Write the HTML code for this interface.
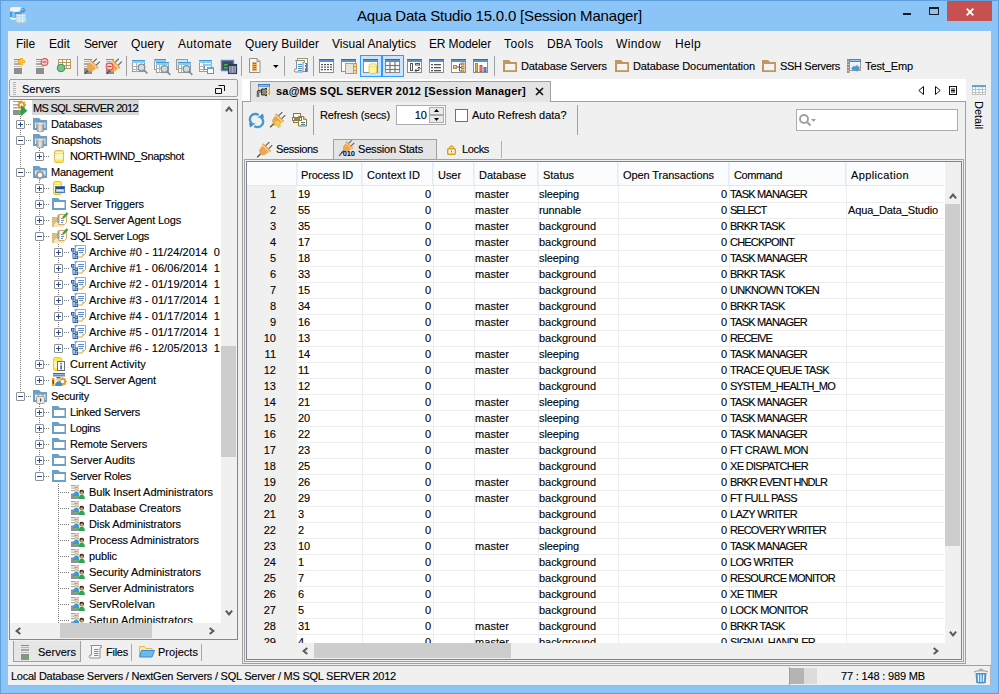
<!DOCTYPE html>
<html><head><meta charset="utf-8"><title>Aqua Data Studio 15.0.0 [Session Manager]</title>
<style>
html,body{margin:0;padding:0}
body{width:999px;height:694px;overflow:hidden;position:relative;background:#8bc4f7;font-family:"Liberation Sans",sans-serif;font-size:11px;color:#000}
.a{position:absolute;box-sizing:border-box}
.t{position:absolute;white-space:pre;color:#000}
.s{-webkit-text-stroke:0.12px #000}
.b{font-weight:bold}
svg{overflow:visible}
</style></head><body>
<svg width="0" height="0" style="position:absolute"><defs><linearGradient id="gcyl" x1="0" x2="1" y1="0" y2="0"><stop offset="0" stop-color="#9a9a9a"/><stop offset=".45" stop-color="#f0f0f0"/><stop offset="1" stop-color="#8c8c8c"/></linearGradient></defs></svg>
<div class="a" style="left:0px;top:0px;width:999px;height:694px;border:1px solid #5f9fdc;"></div>
<div class="a" style="left:8px;top:31px;width:983px;height:655px;background:#f0f0f0;"></div>
<svg class="a" style="left:10px;top:7px" width="17" height="17" viewBox="0 0 17 17"><rect x="0" y="0" width="11.800" height="12.800" rx="2.500" ry="1.800" fill="#f6f2ee"/><path d="M0 4.300 q5.900 1.600 11.800 0 v5.700 q-5.900 1.600 -11.800 0z" fill="#3a9cec"/><path d="M2 4.800 q2 .5 3 .5 v5.700 q-1.500 0 -3 -.5z" fill="#7cc4f8"/><circle cx="12.8" cy="3.3" r="2.4" fill="#3a98e8" stroke="none" stroke-width="1"/><circle cx="12.5" cy="2.7" r="1" fill="#8cccf8" stroke="none" stroke-width="1"/><rect x="5.9" y="7" width="10.1" height="9" fill="#a4e0f8" /><rect x="5.9" y="7" width="10.1" height="2" fill="#eceae6" /><rect x="6.200" y="7.300" width="9.500" height="8.400" fill="none" stroke="#c8c2bc" stroke-width=".8"/><line x1="6" y1="11" x2="16" y2="11" stroke="#e8f8ff" stroke-width="0.7" /><line x1="6" y1="13.3" x2="16" y2="13.3" stroke="#e8f8ff" stroke-width="0.7" /><line x1="9.3" y1="9" x2="9.3" y2="16" stroke="#e8f8ff" stroke-width="0.7" /><line x1="12.6" y1="9" x2="12.6" y2="16" stroke="#e8f8ff" stroke-width="0.7" /></svg>
<span id="t1" class="t " style="top:5.5px;font-size:15px;line-height:20px;height:20px;left:357px;letter-spacing:-0.188px;">Aqua Data Studio 15.0.0 [Session Manager]</span>
<div class="a" style="left:903px;top:13px;width:8px;height:2px;background:#1a1a1a;"></div>
<div class="a" style="left:929px;top:7px;width:10px;height:8px;border:1px solid #1a1a1a;border-top-width:2px;"></div>
<div class="a" style="left:947px;top:1px;width:45px;height:20px;background:#c75050;"></div>
<svg class="a" style="left:966px;top:7.5px" width="8" height="8" viewBox="0 0 8 8"><path d="M.7 .7 L7.300 7.300 M7.300 .7 L.7 7.300" stroke="#fff" stroke-width="1.900" fill="none"/></svg>
<span id="t2" class="t " style="top:34.5px;font-size:12px;line-height:18px;height:18px;left:16px;letter-spacing:-0.086px;">File</span>
<span id="t3" class="t " style="top:34.5px;font-size:12px;line-height:18px;height:18px;left:49px;letter-spacing:0.078px;">Edit</span>
<span id="t4" class="t " style="top:34.5px;font-size:12px;line-height:18px;height:18px;left:84px;letter-spacing:-0.391px;">Server</span>
<span id="t5" class="t " style="top:34.5px;font-size:12px;line-height:18px;height:18px;left:131px;letter-spacing:0.062px;">Query</span>
<span id="t6" class="t " style="top:34.5px;font-size:12px;line-height:18px;height:18px;left:178px;letter-spacing:0.328px;">Automate</span>
<span id="t7" class="t " style="top:34.5px;font-size:12px;line-height:18px;height:18px;left:245px;letter-spacing:0.048px;">Query Builder</span>
<span id="t8" class="t " style="top:34.5px;font-size:12px;line-height:18px;height:18px;left:332px;letter-spacing:0.053px;">Visual Analytics</span>
<span id="t9" class="t " style="top:34.5px;font-size:12px;line-height:18px;height:18px;left:429px;letter-spacing:-0.136px;">ER Modeler</span>
<span id="t10" class="t " style="top:34.5px;font-size:12px;line-height:18px;height:18px;left:504px;letter-spacing:0.397px;">Tools</span>
<span id="t11" class="t " style="top:34.5px;font-size:12px;line-height:18px;height:18px;left:547px;letter-spacing:0.094px;">DBA Tools</span>
<span id="t12" class="t " style="top:34.5px;font-size:12px;line-height:18px;height:18px;left:616px;letter-spacing:0.385px;">Window</span>
<span id="t13" class="t " style="top:34.5px;font-size:12px;line-height:18px;height:18px;left:675px;letter-spacing:0.328px;">Help</span>
<svg class="a" style="left:14px;top:58px" width="16" height="16" viewBox="0 0 16 16"><rect x="0" y="1" width="8" height="1" fill="#8a8a8a" /><rect x="0" y="3" width="8" height="1" fill="#b4b4b4" /><rect x="0" y="5" width="8" height="2" fill="#a8a8a8" /><rect x="0" y="8" width="8" height="1" fill="#bdbdbd" /><rect x="0" y="10" width="8" height="6" fill="#8e8e8e" /><rect x="5" y="12" width="1" height="1" fill="#30e030" /><rect x="6" y="0" width="3" height="7" fill="#f0b030" /><rect x="4" y="2" width="7" height="3" fill="#f0b030" /><rect x="7" y="1" width="1" height="5" fill="#ffd050" /><rect x="5" y="3" width="5" height="1" fill="#ffd050" /></svg>
<svg class="a" style="left:36px;top:58px" width="16" height="16" viewBox="0 0 16 16"><rect x="0" y="1" width="8" height="1" fill="#8a8a8a" /><rect x="0" y="3" width="8" height="1" fill="#b4b4b4" /><rect x="0" y="5" width="8" height="2" fill="#a8a8a8" /><rect x="0" y="8" width="8" height="1" fill="#bdbdbd" /><rect x="0" y="10" width="8" height="6" fill="#8e8e8e" /><rect x="5" y="12" width="1" height="1" fill="#30e030" /><circle cx="8.5" cy="4" r="3.4" fill="#fad8d8" stroke="#e05050" stroke-width="1.1"/><rect x="6.5" y="3.4" width="4" height="1.2" fill="#d03838" /></svg>
<svg class="a" style="left:55px;top:58px" width="16" height="16" viewBox="0 0 16 16"><rect x="3.5" y="1.5" width="12" height="9" fill="#fff" stroke="#c09660" stroke-width="1"/><line x1="3" y1="4.5" x2="16" y2="4.5" stroke="#c09660" stroke-width="1" /><line x1="3" y1="7.5" x2="16" y2="7.5" stroke="#c09660" stroke-width="1" /><line x1="7.5" y1="1" x2="7.5" y2="11" stroke="#c09660" stroke-width="1" /><line x1="11.5" y1="1" x2="11.5" y2="11" stroke="#c09660" stroke-width="1" /><circle cx="6" cy="10" r="3.8" fill="#7cc08a" stroke="#2f9e54" stroke-width="1"/></svg>
<div class="a" style="left:77px;top:56px;width:1px;height:20px;background:#a0a0a0;"></div>
<svg class="a" style="left:84px;top:58px" width="16" height="16" viewBox="0 0 16 16"><rect x="0" y="1" width="8" height="1" fill="#8a8a8a" /><rect x="0" y="3" width="8" height="1" fill="#b4b4b4" /><rect x="0" y="5" width="8" height="2" fill="#a8a8a8" /><rect x="0" y="8" width="8" height="1" fill="#bdbdbd" /><rect x="0" y="10" width="8" height="6" fill="#8e8e8e" /><rect x="5" y="12" width="1" height="1" fill="#30e030" /><g transform="translate(8.1 8.3) rotate(-45) scale(1.1)"><line x1="-9.5" y1="0" x2="-4" y2="0" stroke="#505050" stroke-width="1.2" /><path d="M1.500 -3.900 h-2.500 q-4.300 .2 -4.300 3.900 q0 3.700 4.300 3.900 h2.500z" fill="#eca850"/><rect x="1.2" y="-5" width="2.2" height="10" fill="#e8a040" /><rect x="1.3" y="-5" width="0.9" height="10" fill="#f8dcb0" /><line x1="3.4" y1="-1.9" x2="8" y2="-1.9" stroke="#606060" stroke-width="1.1" /><line x1="3.4" y1="1.9" x2="8" y2="1.9" stroke="#606060" stroke-width="1.1" /></g></svg>
<svg class="a" style="left:106px;top:58px" width="16" height="16" viewBox="0 0 16 16"><rect x="0" y="1" width="8" height="1" fill="#8a8a8a" /><rect x="0" y="3" width="8" height="1" fill="#b4b4b4" /><rect x="0" y="5" width="8" height="2" fill="#a8a8a8" /><rect x="0" y="8" width="8" height="1" fill="#bdbdbd" /><rect x="0" y="10" width="8" height="6" fill="#8e8e8e" /><rect x="5" y="12" width="1" height="1" fill="#30e030" /><g transform="translate(8.1 8.3) rotate(-45) scale(1.1)"><line x1="-9.5" y1="0" x2="-4" y2="0" stroke="#505050" stroke-width="1.2" /><path d="M1.500 -3.900 h-2.500 q-4.300 .2 -4.300 3.900 q0 3.700 4.300 3.900 h2.500z" fill="#eca850"/><rect x="1.2" y="-5" width="2.2" height="10" fill="#e8a040" /><rect x="1.3" y="-5" width="0.9" height="10" fill="#f8dcb0" /><line x1="3.4" y1="-1.9" x2="8" y2="-1.9" stroke="#606060" stroke-width="1.1" /><line x1="3.4" y1="1.9" x2="8" y2="1.9" stroke="#606060" stroke-width="1.1" /></g><circle cx="3.5" cy="8.5" r="3.4" fill="#fad8d8" stroke="#e05050" stroke-width="1.1"/><rect x="1.5" y="7.9" width="4" height="1.2" fill="#d03838" /></svg>
<div class="a" style="left:126px;top:56px;width:1px;height:20px;background:#a0a0a0;"></div>
<svg class="a" style="left:132px;top:59px" width="16" height="16" viewBox="0 0 16 16"><rect x="0.5" y="1.5" width="12" height="11" fill="#fff" stroke="#9a9a9a" stroke-width="1"/><rect x="0" y="1" width="13" height="3" fill="#8ecbf0" /><rect x="0" y="1" width="13" height="1" fill="#3d9bd8" /><line x1="0" y1="7.5" x2="13" y2="7.5" stroke="#b0b0b0" stroke-width="1" /><line x1="0" y1="10.5" x2="8" y2="10.5" stroke="#b0b0b0" stroke-width="1" /><line x1="4.5" y1="4" x2="4.5" y2="13" stroke="#b0b0b0" stroke-width="1" /><line x1="11.81" y1="10.81" x2="15.31" y2="14.31" stroke="#8a8a8a" stroke-width="1.6" /><circle cx="9.5" cy="8.5" r="3.3" fill="#c4dff0" stroke="#8c8c8c" stroke-width="1.2"/></svg>
<svg class="a" style="left:154px;top:59px" width="16" height="16" viewBox="0 0 16 16"><rect x="0.5" y="0.5" width="11" height="10" fill="#fff" stroke="#9a9a9a" stroke-width="1"/><rect x="0" y="0" width="12" height="3" fill="#8ecbf0" /><rect x="0" y="0" width="12" height="1" fill="#3d9bd8" /><rect x="2.5" y="3.5" width="12" height="10" fill="#fff" stroke="#9a9a9a" stroke-width="1"/><rect x="2" y="3" width="13" height="3" fill="#8ecbf0" /><rect x="2" y="3" width="13" height="1" fill="#3d9bd8" /><rect x="6" y="7" width="3" height="3" fill="#fae890" /><line x1="2" y1="9.5" x2="9" y2="9.5" stroke="#b0b0b0" stroke-width="1" /><line x1="5.5" y1="6" x2="5.5" y2="14" stroke="#b0b0b0" stroke-width="1" /><line x1="12.81" y1="12.31" x2="16.31" y2="15.81" stroke="#8a8a8a" stroke-width="1.6" /><circle cx="10.5" cy="10" r="3.3" fill="#c4dff0" stroke="#8c8c8c" stroke-width="1.2"/></svg>
<svg class="a" style="left:176px;top:59px" width="16" height="16" viewBox="0 0 16 16"><rect x="0.5" y="0.5" width="11" height="10" fill="#cfe4f4" stroke="#9a9a9a" stroke-width="1"/><rect x="2.5" y="3.5" width="12" height="10" fill="#fff" stroke="#9a9a9a" stroke-width="1"/><rect x="2" y="3" width="13" height="3" fill="#8ecbf0" /><rect x="2" y="3" width="13" height="1" fill="#3d9bd8" /><rect x="6" y="7" width="3" height="3" fill="#fae890" /><line x1="2" y1="9.5" x2="9" y2="9.5" stroke="#b0b0b0" stroke-width="1" /><line x1="5.5" y1="6" x2="5.5" y2="14" stroke="#b0b0b0" stroke-width="1" /><line x1="12.81" y1="12.31" x2="16.31" y2="15.81" stroke="#8a8a8a" stroke-width="1.6" /><circle cx="10.5" cy="10" r="3.3" fill="#c4dff0" stroke="#8c8c8c" stroke-width="1.2"/></svg>
<svg class="a" style="left:199px;top:59px" width="16" height="16" viewBox="0 0 16 16"><rect x="0.5" y="1.5" width="12" height="11" fill="#fff" stroke="#9a9a9a" stroke-width="1"/><rect x="0" y="1" width="13" height="3" fill="#8ecbf0" /><rect x="0" y="1" width="13" height="1" fill="#3d9bd8" /><line x1="0" y1="7.5" x2="6" y2="7.5" stroke="#b0b0b0" stroke-width="1" /><line x1="0" y1="10.5" x2="6" y2="10.5" stroke="#b0b0b0" stroke-width="1" /><line x1="4.5" y1="4" x2="4.5" y2="13" stroke="#b0b0b0" stroke-width="1" /><rect x="5.5" y="5.5" width="7" height="5" fill="#fff" stroke="#8a8a8a" stroke-width="1"/><rect x="5" y="5" width="8" height="2" fill="#8ecbf0" /><rect x="8.5" y="8.5" width="6" height="6" fill="#fff" stroke="#8a8a8a" stroke-width="1"/><rect x="8" y="8" width="7" height="2" fill="#5aa8dc" /></svg>
<svg class="a" style="left:221px;top:59px" width="16" height="16" viewBox="0 0 16 16"><rect x="0.5" y="1.5" width="12" height="10" fill="#4a4a4a" stroke="#5a86c8" stroke-width="1.4"/><rect x="3" y="5" width="5" height="1.5" fill="#30c050" /><rect x="3" y="8" width="5" height="1.5" fill="#30c050" /><rect x="7.5" y="5.5" width="8" height="9" fill="#a4acbc" stroke="#2c3c5c" stroke-width="1.2"/><rect x="7" y="5" width="9" height="2" fill="#2c3c5c" /><line x1="10" y1="7" x2="10" y2="15" stroke="#5c6884" stroke-width="1" /><line x1="13" y1="7" x2="13" y2="15" stroke="#5c6884" stroke-width="1" /></svg>
<div class="a" style="left:241px;top:56px;width:1px;height:20px;background:#a0a0a0;"></div>
<svg class="a" style="left:249px;top:58px" width="12" height="16" viewBox="0 0 12 16"><path d="M.5 .5 h7.5 l3 3 v11 h-10.5 z" fill="#f6f6f6" stroke="#909090"/><path d="M8 .5 v3 h3" fill="none" stroke="#909090"/><rect x="3" y="4" width="5" height="9" fill="#e8b470" /><rect x="4" y="5" width="3" height="1" fill="#3a88c8" /><rect x="4" y="7" width="3" height="1" fill="#3a88c8" /><rect x="4" y="9" width="3" height="1" fill="#3a88c8" /><rect x="4" y="11" width="3" height="1" fill="#3a88c8" /></svg>
<svg class="a" style="left:273px;top:65px" width="5" height="3" viewBox="0 0 5 3"><path d="M0 0 h5.600 l-2.800 3z" fill="#000"/></svg>
<div class="a" style="left:284px;top:56px;width:1px;height:20px;background:#a0a0a0;"></div>
<svg class="a" style="left:292px;top:58px" width="16" height="16" viewBox="0 0 16 16"><rect x="5.5" y="0.5" width="10" height="13" fill="#fff" stroke="#a89858" stroke-width="1"/><rect x="13" y="5" width="2" height="9" fill="#5878c0" /><rect x="13" y="6" width="1" height="1" fill="#fff" /><rect x="13" y="9" width="1" height="1" fill="#fff" /><path d="M3.5 2.5 h9 v2 h-1.5 v9.5 h-8 q-1.5 -1.5 0 -3 h1.5 v-7 q0 -1.5 -1 -1.5z" fill="#f4f4f4" stroke="#8c8c8c"/><line x1="6" y1="6.5" x2="10" y2="6.5" stroke="#4a98d0" stroke-width="1" /><line x1="6" y1="8.5" x2="10" y2="8.5" stroke="#4a98d0" stroke-width="1" /><line x1="6" y1="10.5" x2="10" y2="10.5" stroke="#4a98d0" stroke-width="1" /><line x1="6" y1="12.5" x2="10" y2="12.5" stroke="#4a98d0" stroke-width="1" /></svg>
<div class="a" style="left:313px;top:56px;width:1px;height:20px;background:#a0a0a0;"></div>
<svg class="a" style="left:319px;top:58px" width="16" height="16" viewBox="0 0 16 16"><rect x="0.5" y="1.5" width="14" height="13" fill="#fff" stroke="#8c8c8c" stroke-width="1"/><rect x="0" y="1" width="15" height="3" fill="#5890d0" /><rect x="0" y="1" width="15" height="1" fill="#3868a8" /><rect x="2" y="6" width="2" height="1.2" fill="#555" /><rect x="5" y="6" width="2" height="1.2" fill="#555" /><rect x="8" y="6" width="2" height="1.2" fill="#555" /><rect x="11" y="6" width="2" height="1.2" fill="#555" /><rect x="2" y="8.5" width="2" height="1.2" fill="#555" /><rect x="5" y="8.5" width="2" height="1.2" fill="#555" /><rect x="8" y="8.5" width="2" height="1.2" fill="#555" /><rect x="11" y="8.5" width="2" height="1.2" fill="#555" /><rect x="2" y="11" width="2" height="1.2" fill="#555" /><rect x="5" y="11" width="2" height="1.2" fill="#555" /><rect x="8" y="11" width="2" height="1.2" fill="#555" /><rect x="11" y="11" width="2" height="1.2" fill="#555" /></svg>
<svg class="a" style="left:341px;top:58px" width="16" height="16" viewBox="0 0 16 16"><rect x="0.5" y="1.5" width="14" height="12" fill="#fff" stroke="#8c8c8c" stroke-width="1"/><rect x="0" y="1" width="15" height="3" fill="#5890d0" /><rect x="0" y="1" width="15" height="1" fill="#3868a8" /><rect x="4.5" y="5.5" width="11" height="10" fill="#ece4d4" stroke="#c89858" stroke-width="1"/><rect x="12.5" y="5.5" width="3" height="10" fill="#f0d8b0" stroke="#c89858" stroke-width="1"/><line x1="12" y1="8.5" x2="16" y2="8.5" stroke="#c89858" stroke-width="1" /><line x1="12" y1="12.5" x2="16" y2="12.5" stroke="#c89858" stroke-width="1" /></svg>
<div class="a" style="left:360px;top:55px;width:22px;height:22px;background:#cce4f7;border:1px solid #3399ff;"></div>
<div class="a" style="left:382px;top:55px;width:22px;height:22px;background:#cce4f7;border:1px solid #3399ff;"></div>
<svg class="a" style="left:363px;top:58px" width="16" height="16" viewBox="0 0 16 16"><rect x="0.5" y="1.5" width="14" height="13" fill="#fff" stroke="#8c8c8c" stroke-width="1"/><rect x="0" y="1" width="15" height="3" fill="#5890d0" /><rect x="0" y="1" width="15" height="1" fill="#3868a8" /><rect x="6" y="6" width="7.5" height="9.5" rx="2" ry="1.5" fill="#fdf3a0" stroke="#e0c840" stroke-width=".8"/><ellipse cx="9.75" cy="7.2" rx="3.6" ry="1.2" fill="#fffbd0" stroke="#e0c840" stroke-width=".6"/></svg>
<svg class="a" style="left:385px;top:58px" width="16" height="16" viewBox="0 0 16 16"><rect x="0.5" y="1.5" width="14" height="13" fill="#fff" stroke="#8c8c8c" stroke-width="1"/><rect x="0" y="1" width="15" height="3" fill="#5890d0" /><rect x="0" y="1" width="15" height="1" fill="#3868a8" /><line x1="0" y1="7.5" x2="15" y2="7.5" stroke="#777" stroke-width="1.2" /><line x1="0" y1="11.5" x2="15" y2="11.5" stroke="#777" stroke-width="1.2" /><line x1="5" y1="4" x2="5" y2="15" stroke="#777" stroke-width="1.2" /><line x1="10" y1="4" x2="10" y2="15" stroke="#777" stroke-width="1.2" /></svg>
<svg class="a" style="left:407px;top:58px" width="16" height="16" viewBox="0 0 16 16"><rect x="0.5" y="1.5" width="14" height="13" fill="#fff" stroke="#8c8c8c" stroke-width="1"/><rect x="0" y="1" width="15" height="3" fill="#5890d0" /><rect x="0" y="1" width="15" height="1" fill="#3868a8" /><rect x="3.5" y="5.5" width="2" height="7" fill="#fff" stroke="#555" stroke-width="1"/><rect x="8.5" y="5.5" width="4" height="1.5" fill="#fff" stroke="#555" stroke-width="1"/><path d="M8 12.5 h4 v-3 M10.5 10.5 l1.5 -1.5 l1.5 1.5 M9.5 11 l-1.5 1.5 l1.5 1.5" fill="none" stroke="#444" stroke-width="1"/></svg>
<svg class="a" style="left:429px;top:58px" width="16" height="16" viewBox="0 0 16 16"><rect x="0.5" y="1.5" width="14" height="13" fill="#fff" stroke="#8c8c8c" stroke-width="1"/><rect x="0" y="1" width="15" height="3" fill="#5890d0" /><rect x="0" y="1" width="15" height="1" fill="#3868a8" /><rect x="2" y="6" width="2" height="1.3" fill="#555" /><rect x="5" y="6" width="7" height="1.3" fill="#555" /><rect x="2" y="9" width="2" height="1.3" fill="#555" /><rect x="5" y="9" width="7" height="1.3" fill="#555" /><rect x="2" y="12" width="2" height="1.3" fill="#555" /><rect x="5" y="12" width="7" height="1.3" fill="#555" /></svg>
<svg class="a" style="left:451px;top:58px" width="16" height="16" viewBox="0 0 16 16"><rect x="0.5" y="1.5" width="14" height="13" fill="#fff" stroke="#8c8c8c" stroke-width="1"/><rect x="0" y="1" width="15" height="3" fill="#5890d0" /><rect x="0" y="1" width="15" height="1" fill="#3868a8" /><rect x="2.5" y="7.5" width="3" height="3" fill="#f0c070" stroke="#b08848" stroke-width="1"/><rect x="10.5" y="5" width="2.5" height="2" fill="#f0c070" stroke="#b08848" stroke-width="1"/><rect x="10.5" y="8.5" width="2.5" height="2" fill="#f0c070" stroke="#b08848" stroke-width="1"/><rect x="10.5" y="12" width="2.5" height="2" fill="#f0c070" stroke="#b08848" stroke-width="1"/><path d="M6 9 h2.5 M8.5 6 v7 M8.5 6 h1.5 M8.5 9.5 h1.5 M8.5 13 h1.5" fill="none" stroke="#555" stroke-width="1"/></svg>
<svg class="a" style="left:473px;top:58px" width="16" height="16" viewBox="0 0 16 16"><rect x="0.5" y="1.5" width="14" height="13" fill="#fff" stroke="#8c8c8c" stroke-width="1"/><rect x="0" y="1" width="15" height="3" fill="#5890d0" /><rect x="0" y="1" width="15" height="1" fill="#3868a8" /><rect x="2.5" y="5.5" width="2" height="8" fill="#f0b040" stroke="#b88020" stroke-width="1"/><rect x="7" y="7.5" width="2" height="6" fill="#f09090" stroke="#c84848" stroke-width="1"/><rect x="11" y="9.5" width="2" height="4" fill="#70a8e0" stroke="#3868a8" stroke-width="1"/></svg>
<div class="a" style="left:494px;top:56px;width:1px;height:20px;background:#a0a0a0;"></div>
<svg class="a" style="left:503px;top:58px" width="14" height="14" viewBox="0 0 14 14"><path d="M0 2 h6 l2 2 h6 v10 h-14z" fill="#be9860"/><path d="M2 6 h10.200 v6.200 h-10.200z" fill="#f4f3f0"/></svg>
<span id="t14" class="t s" style="top:58px;font-size:11px;line-height:16px;height:16px;left:521px;letter-spacing:-0.128px;">Database Servers</span>
<svg class="a" style="left:615px;top:58px" width="14" height="14" viewBox="0 0 14 14"><path d="M0 2 h6 l2 2 h6 v10 h-14z" fill="#be9860"/><path d="M2 6 h10.200 v6.200 h-10.200z" fill="#f4f3f0"/></svg>
<span id="t15" class="t s" style="top:58px;font-size:11px;line-height:16px;height:16px;left:633px;letter-spacing:-0.097px;">Database Documentation</span>
<svg class="a" style="left:762px;top:58px" width="14" height="14" viewBox="0 0 14 14"><path d="M0 2 h6 l2 2 h6 v10 h-14z" fill="#be9860"/><path d="M2 6 h10.200 v6.200 h-10.200z" fill="#f4f3f0"/></svg>
<span id="t16" class="t s" style="top:58px;font-size:11px;line-height:16px;height:16px;left:780px;letter-spacing:-0.325px;">SSH Servers</span>
<svg class="a" style="left:847px;top:58px" width="16" height="16" viewBox="0 0 16 16"><rect x="2" y="1" width="12" height="12" fill="#eef4fa" /><rect x="2.5" y="1.5" width="11" height="11" fill="none" stroke="#9a9a9a" stroke-width="1"/><rect x="2" y="1" width="12" height="3" fill="#4888d0" /><rect x="3" y="2" width="10" height="0.8" fill="#a8d0f8" /><rect x="0" y="1" width="2.5" height="14" fill="#909090" /><rect x="0.5" y="3" width="1.5" height="1" fill="#d0d0d0" /><rect x="0.5" y="6" width="1.5" height="1" fill="#d0d0d0" /><rect x="0.5" y="9" width="1.5" height="1" fill="#d0d0d0" /><rect x="0.5" y="12" width="1.5" height="1" fill="#d0d0d0" /><path d="M4 10.500 l3.500 -3.500 v2 l3 -2.500 v2 h2 v3.500 h-2 v2 l-3 -2.500 v2z" fill="#4898d8"/></svg>
<span id="t17" class="t s" style="top:58px;font-size:11px;line-height:16px;height:16px;left:865px;letter-spacing:-0.115px;">Test_Emp</span>
<div class="a" style="left:9px;top:79px;width:229px;height:18px;border:1px solid #a0a0a0;background:#f0f0f0;border-radius:2px;"></div>
<div class="a" style="left:13px;top:82px;width:3px;height:1px;background:#b4b4b4;"></div>
<div class="a" style="left:13px;top:84px;width:3px;height:1px;background:#b4b4b4;"></div>
<div class="a" style="left:13px;top:86px;width:3px;height:1px;background:#b4b4b4;"></div>
<div class="a" style="left:13px;top:88px;width:3px;height:1px;background:#b4b4b4;"></div>
<div class="a" style="left:13px;top:90px;width:3px;height:1px;background:#b4b4b4;"></div>
<div class="a" style="left:13px;top:92px;width:3px;height:1px;background:#b4b4b4;"></div>
<div class="a" style="left:13px;top:94px;width:3px;height:1px;background:#b4b4b4;"></div>
<span id="t18" class="t s" style="top:81px;font-size:11px;line-height:16px;height:16px;left:22px;letter-spacing:0.013px;">Servers</span>
<svg class="a" style="left:215px;top:85px" width="11" height="10" viewBox="0 0 11 10"><path d="M3.500 .5 h6 v5.500 M.5 3.500 h6 v5 h-6z" fill="none" stroke="#111" stroke-width="1"/></svg>
<div class="a" style="left:9px;top:99px;width:229px;height:541px;border:1px solid #828790;background:#fff;"></div>
<div class="a" style="left:221px;top:100px;width:16px;height:523px;background:#f0f0f0;"></div>
<div class="a" style="left:10px;top:623px;width:227px;height:16px;background:#f0f0f0;"></div>
<div class="a" style="left:221px;top:346px;width:15px;height:111px;background:#cdcdcd;"></div>
<div class="a" style="left:60px;top:623px;width:92px;height:15px;background:#cdcdcd;"></div>
<svg class="a" style="left:225px;top:105px" width="8" height="8" viewBox="0 0 8 8"><path d="M.9 6.300 L4 2.600 L7.100 6.300" fill="none" stroke="#5a5a5a" stroke-width="2"/></svg>
<svg class="a" style="left:225px;top:609px" width="8" height="8" viewBox="0 0 8 8"><path d="M.9 1.700 L4 5.400 L7.100 1.700" fill="none" stroke="#5a5a5a" stroke-width="2"/></svg>
<svg class="a" style="left:14px;top:627px" width="8" height="8" viewBox="0 0 8 8"><path d="M6.300 .9 L2.600 4 L6.300 7.100" fill="none" stroke="#5a5a5a" stroke-width="2"/></svg>
<svg class="a" style="left:208px;top:627px" width="8" height="8" viewBox="0 0 8 8"><path d="M1.700 .9 L5.400 4 L1.700 7.100" fill="none" stroke="#5a5a5a" stroke-width="2"/></svg>
<div class="a" style="left:10px;top:99px;width:211px;height:524px;overflow:hidden">
<div class="a" style="left:10px;top:17px;width:1px;height:276px;background:repeating-linear-gradient(to bottom,#7a7a7a 0 1px,transparent 1px 2px)"></div>
<div class="a" style="left:29px;top:49px;width:1px;height:4px;background:repeating-linear-gradient(to bottom,#7a7a7a 0 1px,transparent 1px 2px)"></div>
<div class="a" style="left:29px;top:81px;width:1px;height:192px;background:repeating-linear-gradient(to bottom,#7a7a7a 0 1px,transparent 1px 2px)"></div>
<div class="a" style="left:48px;top:145px;width:1px;height:96px;background:repeating-linear-gradient(to bottom,#7a7a7a 0 1px,transparent 1px 2px)"></div>
<div class="a" style="left:29px;top:305px;width:1px;height:72px;background:repeating-linear-gradient(to bottom,#7a7a7a 0 1px,transparent 1px 2px)"></div>
<div class="a" style="left:48px;top:385px;width:1px;height:139px;background:repeating-linear-gradient(to bottom,#7a7a7a 0 1px,transparent 1px 2px)"></div>
<div class="a" style="left:22px;top:1px;width:107px;height:15px;background:#d9d9d9"></div>
<svg class="a" style="left:3px;top:1px" width="16" height="16" viewBox="0 0 16 16"><rect x="0" y="1" width="8" height="1" fill="#9a9a9a" /><rect x="0" y="4" width="8" height="1.5" fill="#b0b0b0" /><rect x="0" y="7" width="8" height="1.5" fill="#a8a8a8" /><rect x="0" y="10" width="8" height="5" fill="#909090" /><rect x="5" y="12" width="1" height="1" fill="#30e030" /><circle cx="8.5" cy="5" r="2.7" fill="#fff" stroke="#e09a28" stroke-width="1.8"/><rect x="7.7" y="0.5" width="1.6" height="1.6" fill="#e09a28" transform="rotate(0 8.5 5)"/><rect x="7.7" y="0.5" width="1.6" height="1.6" fill="#e09a28" transform="rotate(45 8.5 5)"/><rect x="7.7" y="0.5" width="1.6" height="1.6" fill="#e09a28" transform="rotate(90 8.5 5)"/><rect x="7.7" y="0.5" width="1.6" height="1.6" fill="#e09a28" transform="rotate(135 8.5 5)"/><rect x="7.7" y="0.5" width="1.6" height="1.6" fill="#e09a28" transform="rotate(180 8.5 5)"/><rect x="7.7" y="0.5" width="1.6" height="1.6" fill="#e09a28" transform="rotate(225 8.5 5)"/><rect x="7.7" y="0.5" width="1.6" height="1.6" fill="#e09a28" transform="rotate(270 8.5 5)"/><rect x="7.7" y="0.5" width="1.6" height="1.6" fill="#e09a28" transform="rotate(315 8.5 5)"/><path d="M8 5 L14.3 10.7 L8 16.3z" fill="#22a83a"/></svg>
<span id="t19" class="t s" style="top:1px;font-size:11px;line-height:16px;height:16px;left:23px;letter-spacing:-0.655px;">MS SQL SERVER 2012</span>
<div class="a" style="left:16px;top:25px;width:5px;height:1px;background:repeating-linear-gradient(to right,#7a7a7a 0 1px,transparent 1px 2px)"></div>
<div class="a" style="left:6px;top:21px;width:9px;height:9px;border:1px solid #919191;background:#fff;border-radius:1px"></div>
<div class="a" style="left:8px;top:25px;width:5px;height:1px;background:#2a4a9a"></div>
<div class="a" style="left:10px;top:23px;width:1px;height:5px;background:#2a4a9a"></div>
<svg class="a" style="left:23px;top:17px" width="16" height="16" viewBox="0 0 16 16"><path d="M0 2 h6 l2 2 h6 v10 h-14z" fill="#6a9fc8"/><path d="M2 6.500 h10.500 v5.500 h-10.500z" fill="#e4eef6"/><rect x="3.700" y="6.300" width="7.300" height="9.400" rx="2.500" ry="1.800" fill="url(#gcyl)" stroke="#8a8a8a" stroke-width=".7"/><ellipse cx="7.350" cy="7.800" rx="3.300" ry="1.200" fill="#f2f2f2" stroke="#9a9a9a" stroke-width=".5"/></svg>
<span id="t20" class="t s" style="top:17px;font-size:11px;line-height:16px;height:16px;left:41px;letter-spacing:-0.177px;">Databases</span>
<div class="a" style="left:16px;top:41px;width:5px;height:1px;background:repeating-linear-gradient(to right,#7a7a7a 0 1px,transparent 1px 2px)"></div>
<div class="a" style="left:6px;top:37px;width:9px;height:9px;border:1px solid #919191;background:#fff;border-radius:1px"></div>
<div class="a" style="left:8px;top:41px;width:5px;height:1px;background:#2a4a9a"></div>
<svg class="a" style="left:23px;top:33px" width="16" height="16" viewBox="0 0 16 16"><path d="M0 2 h6 l2 2 h6 v10 h-14z" fill="#6a9fc8"/><path d="M2 6.500 h10.500 v5.500 h-10.500z" fill="#e4eef6"/><rect x="3.700" y="6.300" width="7.300" height="9.400" rx="2.500" ry="1.800" fill="url(#gcyl)" stroke="#8a8a8a" stroke-width=".7"/><ellipse cx="7.350" cy="7.800" rx="3.300" ry="1.200" fill="#f2f2f2" stroke="#9a9a9a" stroke-width=".5"/></svg>
<span id="t21" class="t s" style="top:33px;font-size:11px;line-height:16px;height:16px;left:41px;letter-spacing:-0.220px;">Snapshots</span>
<div class="a" style="left:34px;top:57px;width:5px;height:1px;background:repeating-linear-gradient(to right,#7a7a7a 0 1px,transparent 1px 2px)"></div>
<div class="a" style="left:25px;top:53px;width:9px;height:9px;border:1px solid #919191;background:#fff;border-radius:1px"></div>
<div class="a" style="left:27px;top:57px;width:5px;height:1px;background:#2a4a9a"></div>
<div class="a" style="left:29px;top:55px;width:1px;height:5px;background:#2a4a9a"></div>
<svg class="a" style="left:42px;top:49px" width="16" height="16" viewBox="0 0 16 16"><rect x="2.500" y="2.500" width="9" height="12" rx="1.500" fill="#fbf8c8" stroke="#d8c060" stroke-width="1"/><rect x="3" y="3" width="8" height="3" fill="#ffe54a" /><rect x="3" y="11.5" width="8" height="2.5" fill="#ffe54a" /><rect x="4" y="4" width="6" height="1" fill="#fff8c0" /></svg>
<span id="t22" class="t s" style="top:49px;font-size:11px;line-height:16px;height:16px;left:60px;letter-spacing:-0.380px;">NORTHWIND_Snapshot</span>
<div class="a" style="left:16px;top:73px;width:5px;height:1px;background:repeating-linear-gradient(to right,#7a7a7a 0 1px,transparent 1px 2px)"></div>
<div class="a" style="left:6px;top:69px;width:9px;height:9px;border:1px solid #919191;background:#fff;border-radius:1px"></div>
<div class="a" style="left:8px;top:73px;width:5px;height:1px;background:#2a4a9a"></div>
<svg class="a" style="left:23px;top:65px" width="16" height="16" viewBox="0 0 16 16"><path d="M0 2 h6 l2 2 h6 v10 h-14z" fill="#6a9fc8"/><path d="M2 6.500 h10.500 v5.500 h-10.500z" fill="#e4eef6"/><circle cx="7" cy="11" r="3" fill="#f4f4f4" stroke="#9c9c9c" stroke-width="1.6"/><rect x="6.200" y="6.400" width="1.600" height="1.600" fill="#8c8c8c" transform="rotate(0 7 11)"/><rect x="6.200" y="6.400" width="1.600" height="1.600" fill="#8c8c8c" transform="rotate(45 7 11)"/><rect x="6.200" y="6.400" width="1.600" height="1.600" fill="#8c8c8c" transform="rotate(90 7 11)"/><rect x="6.200" y="6.400" width="1.600" height="1.600" fill="#8c8c8c" transform="rotate(135 7 11)"/><rect x="6.200" y="6.400" width="1.600" height="1.600" fill="#8c8c8c" transform="rotate(180 7 11)"/><rect x="6.200" y="6.400" width="1.600" height="1.600" fill="#8c8c8c" transform="rotate(225 7 11)"/><rect x="6.200" y="6.400" width="1.600" height="1.600" fill="#8c8c8c" transform="rotate(270 7 11)"/><rect x="6.200" y="6.400" width="1.600" height="1.600" fill="#8c8c8c" transform="rotate(315 7 11)"/><circle cx="7" cy="11" r="1.3" fill="#fff" stroke="none" stroke-width="1"/></svg>
<span id="t23" class="t s" style="top:65px;font-size:11px;line-height:16px;height:16px;left:41px;letter-spacing:-0.222px;">Management</span>
<div class="a" style="left:34px;top:89px;width:5px;height:1px;background:repeating-linear-gradient(to right,#7a7a7a 0 1px,transparent 1px 2px)"></div>
<div class="a" style="left:25px;top:85px;width:9px;height:9px;border:1px solid #919191;background:#fff;border-radius:1px"></div>
<div class="a" style="left:27px;top:89px;width:5px;height:1px;background:#2a4a9a"></div>
<div class="a" style="left:29px;top:87px;width:1px;height:5px;background:#2a4a9a"></div>
<svg class="a" style="left:42px;top:81px" width="16" height="16" viewBox="0 0 16 16"><rect x="1.500" y="1.500" width="8" height="13" rx="1.500" fill="#fdf4b0" stroke="#e8c830" stroke-width="1"/><rect x="2" y="2" width="7" height="3" fill="#ffe54a" /><rect x="3" y="3" width="5" height="1" fill="#fff8c0" /><rect x="2" y="12" width="7" height="2" fill="#ffe54a" /><rect x="3" y="6" width="10" height="3" fill="#2c4c90" /><rect x="3" y="9" width="10" height="4" fill="#a8c8e8" /><rect x="3.5" y="6.5" width="9" height="6" fill="none" stroke="#4878b8" stroke-width="1"/><rect x="5" y="10" width="6" height="1" fill="#e8f0f8" /></svg>
<span id="t24" class="t s" style="top:81px;font-size:11px;line-height:16px;height:16px;left:60px;letter-spacing:-0.451px;">Backup</span>
<div class="a" style="left:34px;top:105px;width:5px;height:1px;background:repeating-linear-gradient(to right,#7a7a7a 0 1px,transparent 1px 2px)"></div>
<div class="a" style="left:25px;top:101px;width:9px;height:9px;border:1px solid #919191;background:#fff;border-radius:1px"></div>
<div class="a" style="left:27px;top:105px;width:5px;height:1px;background:#2a4a9a"></div>
<div class="a" style="left:29px;top:103px;width:1px;height:5px;background:#2a4a9a"></div>
<svg class="a" style="left:42px;top:97px" width="16" height="16" viewBox="0 0 16 16"><path d="M0 2 h6 l2 2 h6 v10 h-14z" fill="#6a9fc8"/><path d="M2 6 h10.500 v6 h-10.500z" fill="#fff"/></svg>
<span id="t25" class="t s" style="top:97px;font-size:11px;line-height:16px;height:16px;left:60px;letter-spacing:-0.080px;">Server Triggers</span>
<div class="a" style="left:34px;top:121px;width:5px;height:1px;background:repeating-linear-gradient(to right,#7a7a7a 0 1px,transparent 1px 2px)"></div>
<div class="a" style="left:25px;top:117px;width:9px;height:9px;border:1px solid #919191;background:#fff;border-radius:1px"></div>
<div class="a" style="left:27px;top:121px;width:5px;height:1px;background:#2a4a9a"></div>
<div class="a" style="left:29px;top:119px;width:1px;height:5px;background:#2a4a9a"></div>
<svg class="a" style="left:42px;top:113px" width="16" height="16" viewBox="0 0 16 16"><rect x="0" y="5" width="12" height="10" fill="#d8c080" /><path d="M2 15 v-3 h1 v-1 h1 v-1 h8 v5z" fill="#f0e8c0"/><path d="M6.500 2.500 h8 v8 l-2 2 h-6z" fill="#fff" stroke="#d8a868" stroke-width="1"/><line x1="9" y1="6.5" x2="12" y2="6.5" stroke="#5890d0" stroke-width="1" /><line x1="9" y1="8.5" x2="12" y2="8.5" stroke="#5890d0" stroke-width="1" /><line x1="9" y1="10.5" x2="11" y2="10.5" stroke="#5890d0" stroke-width="1" /><path d="M6.500 3 l1 1 l-1 1 l-1 -1z" fill="#fff" stroke="#444" stroke-width=".5"/><path d="M6.500 5 l1 1 l-1 1 l-1 -1z" fill="#fff" stroke="#444" stroke-width=".5"/><path d="M6.500 7 l1 1 l-1 1 l-1 -1z" fill="#fff" stroke="#444" stroke-width=".5"/><path d="M6.500 9 l1 1 l-1 1 l-1 -1z" fill="#fff" stroke="#444" stroke-width=".5"/><line x1="11" y1="6" x2="15.5" y2="1" stroke="#3aa848" stroke-width="2.4" /><path d="M10 7.200 l.6 -2 l1.500 1.400z" fill="#f0a030"/></svg>
<span id="t26" class="t s" style="top:113px;font-size:11px;line-height:16px;height:16px;left:60px;letter-spacing:-0.199px;">SQL Server Agent Logs</span>
<div class="a" style="left:34px;top:137px;width:5px;height:1px;background:repeating-linear-gradient(to right,#7a7a7a 0 1px,transparent 1px 2px)"></div>
<div class="a" style="left:25px;top:133px;width:9px;height:9px;border:1px solid #919191;background:#fff;border-radius:1px"></div>
<div class="a" style="left:27px;top:137px;width:5px;height:1px;background:#2a4a9a"></div>
<svg class="a" style="left:42px;top:129px" width="16" height="16" viewBox="0 0 16 16"><rect x="0" y="5" width="12" height="10" fill="#d8c080" /><path d="M2 15 v-3 h1 v-1 h1 v-1 h8 v5z" fill="#f0e8c0"/><path d="M6.500 2.500 h8 v8 l-2 2 h-6z" fill="#fff" stroke="#d8a868" stroke-width="1"/><line x1="9" y1="6.5" x2="12" y2="6.5" stroke="#5890d0" stroke-width="1" /><line x1="9" y1="8.5" x2="12" y2="8.5" stroke="#5890d0" stroke-width="1" /><line x1="9" y1="10.5" x2="11" y2="10.5" stroke="#5890d0" stroke-width="1" /><path d="M6.500 3 l1 1 l-1 1 l-1 -1z" fill="#fff" stroke="#444" stroke-width=".5"/><path d="M6.500 5 l1 1 l-1 1 l-1 -1z" fill="#fff" stroke="#444" stroke-width=".5"/><path d="M6.500 7 l1 1 l-1 1 l-1 -1z" fill="#fff" stroke="#444" stroke-width=".5"/><path d="M6.500 9 l1 1 l-1 1 l-1 -1z" fill="#fff" stroke="#444" stroke-width=".5"/><line x1="11" y1="6" x2="15.5" y2="1" stroke="#3aa848" stroke-width="2.4" /><path d="M10 7.200 l.6 -2 l1.500 1.400z" fill="#f0a030"/></svg>
<span id="t27" class="t s" style="top:129px;font-size:11px;line-height:16px;height:16px;left:60px;letter-spacing:-0.331px;">SQL Server Logs</span>
<div class="a" style="left:54px;top:153px;width:5px;height:1px;background:repeating-linear-gradient(to right,#7a7a7a 0 1px,transparent 1px 2px)"></div>
<div class="a" style="left:44px;top:149px;width:9px;height:9px;border:1px solid #919191;background:#fff;border-radius:1px"></div>
<div class="a" style="left:46px;top:153px;width:5px;height:1px;background:#2a4a9a"></div>
<div class="a" style="left:48px;top:151px;width:1px;height:5px;background:#2a4a9a"></div>
<svg class="a" style="left:61px;top:145px" width="16" height="16" viewBox="0 0 16 16"><path d="M4.500 1.500 h10 v8 l-3.500 3.500 h-6.500z" fill="#fff" stroke="#d0a060" stroke-width="1"/><path d="M11 13 v-3.500 h3.500z" fill="#e8c890"/><line x1="7" y1="4.5" x2="13" y2="4.5" stroke="#5890d0" stroke-width="1" /><line x1="7" y1="6.5" x2="13" y2="6.5" stroke="#5890d0" stroke-width="1" /><line x1="8" y1="8.5" x2="12" y2="8.5" stroke="#5890d0" stroke-width="1" /><path d="M2 6 v8.500 h2 M2 9.500 h3" fill="none" stroke="#2a60a8" stroke-width="1"/><rect x="0.5" y="4.5" width="2.5" height="2.5" fill="#b8d8f8" stroke="#2a60a8" stroke-width="1"/><rect x="4" y="8" width="2.5" height="2.5" fill="#b8d8f8" stroke="#2a60a8" stroke-width="1"/><rect x="4" y="12" width="2.5" height="2.5" fill="#b8d8f8" stroke="#2a60a8" stroke-width="1"/><path d="M4.500 1 l1 1 l-1 1 l-1 -1z" fill="#fff" stroke="#444" stroke-width=".5"/></svg>
<span id="t28" class="t s" style="top:145px;font-size:11px;line-height:16px;height:16px;left:79px;letter-spacing:0.107px;">Archive #0 - 11/24/2014  0</span>
<div class="a" style="left:54px;top:169px;width:5px;height:1px;background:repeating-linear-gradient(to right,#7a7a7a 0 1px,transparent 1px 2px)"></div>
<div class="a" style="left:44px;top:165px;width:9px;height:9px;border:1px solid #919191;background:#fff;border-radius:1px"></div>
<div class="a" style="left:46px;top:169px;width:5px;height:1px;background:#2a4a9a"></div>
<div class="a" style="left:48px;top:167px;width:1px;height:5px;background:#2a4a9a"></div>
<svg class="a" style="left:61px;top:161px" width="16" height="16" viewBox="0 0 16 16"><path d="M4.500 1.500 h10 v8 l-3.500 3.500 h-6.500z" fill="#fff" stroke="#d0a060" stroke-width="1"/><path d="M11 13 v-3.500 h3.500z" fill="#e8c890"/><line x1="7" y1="4.5" x2="13" y2="4.5" stroke="#5890d0" stroke-width="1" /><line x1="7" y1="6.5" x2="13" y2="6.5" stroke="#5890d0" stroke-width="1" /><line x1="8" y1="8.5" x2="12" y2="8.5" stroke="#5890d0" stroke-width="1" /><path d="M2 6 v8.500 h2 M2 9.500 h3" fill="none" stroke="#2a60a8" stroke-width="1"/><rect x="0.5" y="4.5" width="2.5" height="2.5" fill="#b8d8f8" stroke="#2a60a8" stroke-width="1"/><rect x="4" y="8" width="2.5" height="2.5" fill="#b8d8f8" stroke="#2a60a8" stroke-width="1"/><rect x="4" y="12" width="2.5" height="2.5" fill="#b8d8f8" stroke="#2a60a8" stroke-width="1"/><path d="M4.500 1 l1 1 l-1 1 l-1 -1z" fill="#fff" stroke="#444" stroke-width=".5"/></svg>
<span id="t29" class="t s" style="top:161px;font-size:11px;line-height:16px;height:16px;left:79px;letter-spacing:0.076px;">Archive #1 - 06/06/2014  1</span>
<div class="a" style="left:54px;top:185px;width:5px;height:1px;background:repeating-linear-gradient(to right,#7a7a7a 0 1px,transparent 1px 2px)"></div>
<div class="a" style="left:44px;top:181px;width:9px;height:9px;border:1px solid #919191;background:#fff;border-radius:1px"></div>
<div class="a" style="left:46px;top:185px;width:5px;height:1px;background:#2a4a9a"></div>
<div class="a" style="left:48px;top:183px;width:1px;height:5px;background:#2a4a9a"></div>
<svg class="a" style="left:61px;top:177px" width="16" height="16" viewBox="0 0 16 16"><path d="M4.500 1.500 h10 v8 l-3.500 3.500 h-6.500z" fill="#fff" stroke="#d0a060" stroke-width="1"/><path d="M11 13 v-3.500 h3.500z" fill="#e8c890"/><line x1="7" y1="4.5" x2="13" y2="4.5" stroke="#5890d0" stroke-width="1" /><line x1="7" y1="6.5" x2="13" y2="6.5" stroke="#5890d0" stroke-width="1" /><line x1="8" y1="8.5" x2="12" y2="8.5" stroke="#5890d0" stroke-width="1" /><path d="M2 6 v8.500 h2 M2 9.500 h3" fill="none" stroke="#2a60a8" stroke-width="1"/><rect x="0.5" y="4.5" width="2.5" height="2.5" fill="#b8d8f8" stroke="#2a60a8" stroke-width="1"/><rect x="4" y="8" width="2.5" height="2.5" fill="#b8d8f8" stroke="#2a60a8" stroke-width="1"/><rect x="4" y="12" width="2.5" height="2.5" fill="#b8d8f8" stroke="#2a60a8" stroke-width="1"/><path d="M4.500 1 l1 1 l-1 1 l-1 -1z" fill="#fff" stroke="#444" stroke-width=".5"/></svg>
<span id="t30" class="t s" style="top:177px;font-size:11px;line-height:16px;height:16px;left:79px;letter-spacing:0.076px;">Archive #2 - 01/19/2014  1</span>
<div class="a" style="left:54px;top:201px;width:5px;height:1px;background:repeating-linear-gradient(to right,#7a7a7a 0 1px,transparent 1px 2px)"></div>
<div class="a" style="left:44px;top:197px;width:9px;height:9px;border:1px solid #919191;background:#fff;border-radius:1px"></div>
<div class="a" style="left:46px;top:201px;width:5px;height:1px;background:#2a4a9a"></div>
<div class="a" style="left:48px;top:199px;width:1px;height:5px;background:#2a4a9a"></div>
<svg class="a" style="left:61px;top:193px" width="16" height="16" viewBox="0 0 16 16"><path d="M4.500 1.500 h10 v8 l-3.500 3.500 h-6.500z" fill="#fff" stroke="#d0a060" stroke-width="1"/><path d="M11 13 v-3.500 h3.500z" fill="#e8c890"/><line x1="7" y1="4.5" x2="13" y2="4.5" stroke="#5890d0" stroke-width="1" /><line x1="7" y1="6.5" x2="13" y2="6.5" stroke="#5890d0" stroke-width="1" /><line x1="8" y1="8.5" x2="12" y2="8.5" stroke="#5890d0" stroke-width="1" /><path d="M2 6 v8.500 h2 M2 9.500 h3" fill="none" stroke="#2a60a8" stroke-width="1"/><rect x="0.5" y="4.5" width="2.5" height="2.5" fill="#b8d8f8" stroke="#2a60a8" stroke-width="1"/><rect x="4" y="8" width="2.5" height="2.5" fill="#b8d8f8" stroke="#2a60a8" stroke-width="1"/><rect x="4" y="12" width="2.5" height="2.5" fill="#b8d8f8" stroke="#2a60a8" stroke-width="1"/><path d="M4.500 1 l1 1 l-1 1 l-1 -1z" fill="#fff" stroke="#444" stroke-width=".5"/></svg>
<span id="t31" class="t s" style="top:193px;font-size:11px;line-height:16px;height:16px;left:79px;letter-spacing:0.076px;">Archive #3 - 01/17/2014  1</span>
<div class="a" style="left:54px;top:217px;width:5px;height:1px;background:repeating-linear-gradient(to right,#7a7a7a 0 1px,transparent 1px 2px)"></div>
<div class="a" style="left:44px;top:213px;width:9px;height:9px;border:1px solid #919191;background:#fff;border-radius:1px"></div>
<div class="a" style="left:46px;top:217px;width:5px;height:1px;background:#2a4a9a"></div>
<div class="a" style="left:48px;top:215px;width:1px;height:5px;background:#2a4a9a"></div>
<svg class="a" style="left:61px;top:209px" width="16" height="16" viewBox="0 0 16 16"><path d="M4.500 1.500 h10 v8 l-3.500 3.500 h-6.500z" fill="#fff" stroke="#d0a060" stroke-width="1"/><path d="M11 13 v-3.500 h3.500z" fill="#e8c890"/><line x1="7" y1="4.5" x2="13" y2="4.5" stroke="#5890d0" stroke-width="1" /><line x1="7" y1="6.5" x2="13" y2="6.5" stroke="#5890d0" stroke-width="1" /><line x1="8" y1="8.5" x2="12" y2="8.5" stroke="#5890d0" stroke-width="1" /><path d="M2 6 v8.500 h2 M2 9.500 h3" fill="none" stroke="#2a60a8" stroke-width="1"/><rect x="0.5" y="4.5" width="2.5" height="2.5" fill="#b8d8f8" stroke="#2a60a8" stroke-width="1"/><rect x="4" y="8" width="2.5" height="2.5" fill="#b8d8f8" stroke="#2a60a8" stroke-width="1"/><rect x="4" y="12" width="2.5" height="2.5" fill="#b8d8f8" stroke="#2a60a8" stroke-width="1"/><path d="M4.500 1 l1 1 l-1 1 l-1 -1z" fill="#fff" stroke="#444" stroke-width=".5"/></svg>
<span id="t32" class="t s" style="top:209px;font-size:11px;line-height:16px;height:16px;left:79px;letter-spacing:0.076px;">Archive #4 - 01/17/2014  1</span>
<div class="a" style="left:54px;top:233px;width:5px;height:1px;background:repeating-linear-gradient(to right,#7a7a7a 0 1px,transparent 1px 2px)"></div>
<div class="a" style="left:44px;top:229px;width:9px;height:9px;border:1px solid #919191;background:#fff;border-radius:1px"></div>
<div class="a" style="left:46px;top:233px;width:5px;height:1px;background:#2a4a9a"></div>
<div class="a" style="left:48px;top:231px;width:1px;height:5px;background:#2a4a9a"></div>
<svg class="a" style="left:61px;top:225px" width="16" height="16" viewBox="0 0 16 16"><path d="M4.500 1.500 h10 v8 l-3.500 3.500 h-6.500z" fill="#fff" stroke="#d0a060" stroke-width="1"/><path d="M11 13 v-3.500 h3.500z" fill="#e8c890"/><line x1="7" y1="4.5" x2="13" y2="4.5" stroke="#5890d0" stroke-width="1" /><line x1="7" y1="6.5" x2="13" y2="6.5" stroke="#5890d0" stroke-width="1" /><line x1="8" y1="8.5" x2="12" y2="8.5" stroke="#5890d0" stroke-width="1" /><path d="M2 6 v8.500 h2 M2 9.500 h3" fill="none" stroke="#2a60a8" stroke-width="1"/><rect x="0.5" y="4.5" width="2.5" height="2.5" fill="#b8d8f8" stroke="#2a60a8" stroke-width="1"/><rect x="4" y="8" width="2.5" height="2.5" fill="#b8d8f8" stroke="#2a60a8" stroke-width="1"/><rect x="4" y="12" width="2.5" height="2.5" fill="#b8d8f8" stroke="#2a60a8" stroke-width="1"/><path d="M4.500 1 l1 1 l-1 1 l-1 -1z" fill="#fff" stroke="#444" stroke-width=".5"/></svg>
<span id="t33" class="t s" style="top:225px;font-size:11px;line-height:16px;height:16px;left:79px;letter-spacing:0.076px;">Archive #5 - 01/17/2014  1</span>
<div class="a" style="left:54px;top:249px;width:5px;height:1px;background:repeating-linear-gradient(to right,#7a7a7a 0 1px,transparent 1px 2px)"></div>
<div class="a" style="left:44px;top:245px;width:9px;height:9px;border:1px solid #919191;background:#fff;border-radius:1px"></div>
<div class="a" style="left:46px;top:249px;width:5px;height:1px;background:#2a4a9a"></div>
<div class="a" style="left:48px;top:247px;width:1px;height:5px;background:#2a4a9a"></div>
<svg class="a" style="left:61px;top:241px" width="16" height="16" viewBox="0 0 16 16"><path d="M4.500 1.500 h10 v8 l-3.500 3.500 h-6.500z" fill="#fff" stroke="#d0a060" stroke-width="1"/><path d="M11 13 v-3.500 h3.500z" fill="#e8c890"/><line x1="7" y1="4.5" x2="13" y2="4.5" stroke="#5890d0" stroke-width="1" /><line x1="7" y1="6.5" x2="13" y2="6.5" stroke="#5890d0" stroke-width="1" /><line x1="8" y1="8.5" x2="12" y2="8.5" stroke="#5890d0" stroke-width="1" /><path d="M2 6 v8.500 h2 M2 9.500 h3" fill="none" stroke="#2a60a8" stroke-width="1"/><rect x="0.5" y="4.5" width="2.5" height="2.5" fill="#b8d8f8" stroke="#2a60a8" stroke-width="1"/><rect x="4" y="8" width="2.5" height="2.5" fill="#b8d8f8" stroke="#2a60a8" stroke-width="1"/><rect x="4" y="12" width="2.5" height="2.5" fill="#b8d8f8" stroke="#2a60a8" stroke-width="1"/><path d="M4.500 1 l1 1 l-1 1 l-1 -1z" fill="#fff" stroke="#444" stroke-width=".5"/></svg>
<span id="t34" class="t s" style="top:241px;font-size:11px;line-height:16px;height:16px;left:79px;letter-spacing:0.076px;">Archive #6 - 12/05/2013  1</span>
<div class="a" style="left:34px;top:265px;width:5px;height:1px;background:repeating-linear-gradient(to right,#7a7a7a 0 1px,transparent 1px 2px)"></div>
<div class="a" style="left:25px;top:261px;width:9px;height:9px;border:1px solid #919191;background:#fff;border-radius:1px"></div>
<div class="a" style="left:27px;top:265px;width:5px;height:1px;background:#2a4a9a"></div>
<div class="a" style="left:29px;top:263px;width:1px;height:5px;background:#2a4a9a"></div>
<svg class="a" style="left:42px;top:257px" width="16" height="16" viewBox="0 0 16 16"><rect x="1.500" y="1.500" width="8" height="13" rx="1.500" fill="#fdf4b0" stroke="#e8c830" stroke-width="1"/><rect x="2" y="2" width="7" height="3" fill="#ffe54a" /><rect x="2" y="12" width="7" height="2" fill="#ffe54a" /><rect x="5.5" y="5.5" width="7" height="9" fill="#fff" stroke="#707070" stroke-width="1"/><rect x="8.3" y="6.8" width="1.6" height="1.6" fill="#3a6ab8" /><rect x="8.3" y="9.3" width="1.6" height="4.2" fill="#3a6ab8" /></svg>
<span id="t35" class="t s" style="top:257px;font-size:11px;line-height:16px;height:16px;left:60px;letter-spacing:0.127px;">Current Activity</span>
<div class="a" style="left:34px;top:281px;width:5px;height:1px;background:repeating-linear-gradient(to right,#7a7a7a 0 1px,transparent 1px 2px)"></div>
<div class="a" style="left:25px;top:277px;width:9px;height:9px;border:1px solid #919191;background:#fff;border-radius:1px"></div>
<div class="a" style="left:27px;top:281px;width:5px;height:1px;background:#2a4a9a"></div>
<div class="a" style="left:29px;top:279px;width:1px;height:5px;background:#2a4a9a"></div>
<svg class="a" style="left:42px;top:273px" width="16" height="16" viewBox="0 0 16 16"><rect x="1" y="1" width="12" height="1.5" fill="#3a68b0" /><rect x="1" y="3" width="12" height="1.5" fill="#5890d0" /><rect x="0" y="6" width="2.5" height="8" fill="#f0a020" /><rect x="0.5" y="8" width="1.3" height="4" fill="#804000" /><circle cx="10.5" cy="9.5" r="2.6" fill="#fff" stroke="#e09a28" stroke-width="1.8"/><rect x="9.800" y="5.200" width="1.400" height="1.600" fill="#e09a28" transform="rotate(0 10.500 9.500)"/><rect x="9.800" y="5.200" width="1.400" height="1.600" fill="#e09a28" transform="rotate(45 10.500 9.500)"/><rect x="9.800" y="5.200" width="1.400" height="1.600" fill="#e09a28" transform="rotate(90 10.500 9.500)"/><rect x="9.800" y="5.200" width="1.400" height="1.600" fill="#e09a28" transform="rotate(135 10.500 9.500)"/><rect x="9.800" y="5.200" width="1.400" height="1.600" fill="#e09a28" transform="rotate(180 10.500 9.500)"/><rect x="9.800" y="5.200" width="1.400" height="1.600" fill="#e09a28" transform="rotate(225 10.500 9.500)"/><rect x="9.800" y="5.200" width="1.400" height="1.600" fill="#e09a28" transform="rotate(270 10.500 9.500)"/><rect x="9.800" y="5.200" width="1.400" height="1.600" fill="#e09a28" transform="rotate(315 10.500 9.500)"/><circle cx="6.5" cy="7.5" r="2.2" fill="#f0c898" stroke="none" stroke-width="1"/><rect x="4.5" y="5" width="4" height="1.2" fill="#666" /><path d="M3 14 q0 -4.500 3.500 -4.500 q3.500 0 3.500 4.500z" fill="#3890d8"/></svg>
<span id="t36" class="t s" style="top:273px;font-size:11px;line-height:16px;height:16px;left:60px;letter-spacing:-0.142px;">SQL Server Agent</span>
<div class="a" style="left:16px;top:297px;width:5px;height:1px;background:repeating-linear-gradient(to right,#7a7a7a 0 1px,transparent 1px 2px)"></div>
<div class="a" style="left:6px;top:293px;width:9px;height:9px;border:1px solid #919191;background:#fff;border-radius:1px"></div>
<div class="a" style="left:8px;top:297px;width:5px;height:1px;background:#2a4a9a"></div>
<svg class="a" style="left:23px;top:289px" width="16" height="16" viewBox="0 0 16 16"><path d="M0 2 h6 l2 2 h6 v10 h-14z" fill="#6a9fc8"/><path d="M2 6.500 h10.500 v5.500 h-10.500z" fill="#e4eef6"/><path d="M5 9 v-2 q2.500 -3 5 0 v2" fill="none" stroke="#9a9a9a" stroke-width="1.300"/><rect x="3.500" y="8.500" width="8" height="7" rx="1" fill="#e8e8e8" stroke="#909090" stroke-width=".8"/><rect x="7" y="10.5" width="1.2" height="3" fill="#444" /></svg>
<span id="t37" class="t s" style="top:289px;font-size:11px;line-height:16px;height:16px;left:41px;letter-spacing:-0.219px;">Security</span>
<div class="a" style="left:34px;top:313px;width:5px;height:1px;background:repeating-linear-gradient(to right,#7a7a7a 0 1px,transparent 1px 2px)"></div>
<div class="a" style="left:25px;top:309px;width:9px;height:9px;border:1px solid #919191;background:#fff;border-radius:1px"></div>
<div class="a" style="left:27px;top:313px;width:5px;height:1px;background:#2a4a9a"></div>
<div class="a" style="left:29px;top:311px;width:1px;height:5px;background:#2a4a9a"></div>
<svg class="a" style="left:42px;top:305px" width="16" height="16" viewBox="0 0 16 16"><path d="M0 2 h6 l2 2 h6 v10 h-14z" fill="#6a9fc8"/><path d="M2 6 h10.500 v6 h-10.500z" fill="#fff"/></svg>
<span id="t38" class="t s" style="top:305px;font-size:11px;line-height:16px;height:16px;left:60px;letter-spacing:-0.241px;">Linked Servers</span>
<div class="a" style="left:34px;top:329px;width:5px;height:1px;background:repeating-linear-gradient(to right,#7a7a7a 0 1px,transparent 1px 2px)"></div>
<div class="a" style="left:25px;top:325px;width:9px;height:9px;border:1px solid #919191;background:#fff;border-radius:1px"></div>
<div class="a" style="left:27px;top:329px;width:5px;height:1px;background:#2a4a9a"></div>
<div class="a" style="left:29px;top:327px;width:1px;height:5px;background:#2a4a9a"></div>
<svg class="a" style="left:42px;top:321px" width="16" height="16" viewBox="0 0 16 16"><path d="M0 2 h6 l2 2 h6 v10 h-14z" fill="#6a9fc8"/><path d="M2 6 h10.500 v6 h-10.500z" fill="#fff"/></svg>
<span id="t39" class="t s" style="top:321px;font-size:11px;line-height:16px;height:16px;left:60px;letter-spacing:-0.404px;">Logins</span>
<div class="a" style="left:34px;top:345px;width:5px;height:1px;background:repeating-linear-gradient(to right,#7a7a7a 0 1px,transparent 1px 2px)"></div>
<div class="a" style="left:25px;top:341px;width:9px;height:9px;border:1px solid #919191;background:#fff;border-radius:1px"></div>
<div class="a" style="left:27px;top:345px;width:5px;height:1px;background:#2a4a9a"></div>
<div class="a" style="left:29px;top:343px;width:1px;height:5px;background:#2a4a9a"></div>
<svg class="a" style="left:42px;top:337px" width="16" height="16" viewBox="0 0 16 16"><path d="M0 2 h6 l2 2 h6 v10 h-14z" fill="#6a9fc8"/><path d="M2 6 h10.500 v6 h-10.500z" fill="#fff"/></svg>
<span id="t40" class="t s" style="top:337px;font-size:11px;line-height:16px;height:16px;left:60px;letter-spacing:-0.177px;">Remote Servers</span>
<div class="a" style="left:34px;top:361px;width:5px;height:1px;background:repeating-linear-gradient(to right,#7a7a7a 0 1px,transparent 1px 2px)"></div>
<div class="a" style="left:25px;top:357px;width:9px;height:9px;border:1px solid #919191;background:#fff;border-radius:1px"></div>
<div class="a" style="left:27px;top:361px;width:5px;height:1px;background:#2a4a9a"></div>
<div class="a" style="left:29px;top:359px;width:1px;height:5px;background:#2a4a9a"></div>
<svg class="a" style="left:42px;top:353px" width="16" height="16" viewBox="0 0 16 16"><path d="M0 2 h6 l2 2 h6 v10 h-14z" fill="#6a9fc8"/><path d="M2 6 h10.500 v6 h-10.500z" fill="#fff"/></svg>
<span id="t41" class="t s" style="top:353px;font-size:11px;line-height:16px;height:16px;left:60px;letter-spacing:-0.032px;">Server Audits</span>
<div class="a" style="left:34px;top:377px;width:5px;height:1px;background:repeating-linear-gradient(to right,#7a7a7a 0 1px,transparent 1px 2px)"></div>
<div class="a" style="left:25px;top:373px;width:9px;height:9px;border:1px solid #919191;background:#fff;border-radius:1px"></div>
<div class="a" style="left:27px;top:377px;width:5px;height:1px;background:#2a4a9a"></div>
<svg class="a" style="left:42px;top:369px" width="16" height="16" viewBox="0 0 16 16"><path d="M0 2 h6 l2 2 h6 v10 h-14z" fill="#6a9fc8"/><path d="M2 6 h10.500 v6 h-10.500z" fill="#fff"/></svg>
<span id="t42" class="t s" style="top:369px;font-size:11px;line-height:16px;height:16px;left:60px;letter-spacing:-0.215px;">Server Roles</span>
<div class="a" style="left:48px;top:393px;width:11px;height:1px;background:repeating-linear-gradient(to right,#7a7a7a 0 1px,transparent 1px 2px)"></div>
<svg class="a" style="left:61px;top:385px" width="16" height="16" viewBox="0 0 16 16"><rect x="0" y="1" width="8" height="1.2" fill="#9a9a9a" /><rect x="0" y="3.5" width="8" height="1.2" fill="#b4b4b4" /><rect x="0" y="6" width="8" height="1.2" fill="#a8a8a8" /><rect x="0" y="9.5" width="8" height="5.5" fill="#909090" /><rect x="3.5" y="1.5" width="3.5" height="1.5" fill="#fff" /><circle cx="5.2" cy="5" r="2.2" fill="#f0c898" stroke="none" stroke-width="1"/><rect x="3.3" y="2.6" width="3.8" height="0.9" fill="#888" /><path d="M2.300 12 q0 -4.500 3 -4.500 q3 0 3 4.500z" fill="#3e98e0"/><rect x="5" y="12" width="1" height="1" fill="#30e030" /><circle cx="10.7" cy="8" r="2.3" fill="#3a2008" stroke="none" stroke-width="1"/><circle cx="10.7" cy="8.8" r="1.5" fill="#d8a060" stroke="none" stroke-width="1"/><path d="M7.800 15 q0 -4.500 3 -4.500 q3 0 3 4.500z" fill="#2aa850"/></svg>
<span id="t43" class="t s" style="top:385px;font-size:11px;line-height:16px;height:16px;left:79px;letter-spacing:-0.028px;">Bulk Insert Administrators</span>
<div class="a" style="left:48px;top:409px;width:11px;height:1px;background:repeating-linear-gradient(to right,#7a7a7a 0 1px,transparent 1px 2px)"></div>
<svg class="a" style="left:61px;top:401px" width="16" height="16" viewBox="0 0 16 16"><rect x="0" y="1" width="8" height="1.2" fill="#9a9a9a" /><rect x="0" y="3.5" width="8" height="1.2" fill="#b4b4b4" /><rect x="0" y="6" width="8" height="1.2" fill="#a8a8a8" /><rect x="0" y="9.5" width="8" height="5.5" fill="#909090" /><rect x="3.5" y="1.5" width="3.5" height="1.5" fill="#fff" /><circle cx="5.2" cy="5" r="2.2" fill="#f0c898" stroke="none" stroke-width="1"/><rect x="3.3" y="2.6" width="3.8" height="0.9" fill="#888" /><path d="M2.300 12 q0 -4.500 3 -4.500 q3 0 3 4.500z" fill="#3e98e0"/><rect x="5" y="12" width="1" height="1" fill="#30e030" /><circle cx="10.7" cy="8" r="2.3" fill="#3a2008" stroke="none" stroke-width="1"/><circle cx="10.7" cy="8.8" r="1.5" fill="#d8a060" stroke="none" stroke-width="1"/><path d="M7.800 15 q0 -4.500 3 -4.500 q3 0 3 4.500z" fill="#2aa850"/></svg>
<span id="t44" class="t s" style="top:401px;font-size:11px;line-height:16px;height:16px;left:79px;letter-spacing:-0.019px;">Database Creators</span>
<div class="a" style="left:48px;top:425px;width:11px;height:1px;background:repeating-linear-gradient(to right,#7a7a7a 0 1px,transparent 1px 2px)"></div>
<svg class="a" style="left:61px;top:417px" width="16" height="16" viewBox="0 0 16 16"><rect x="0" y="1" width="8" height="1.2" fill="#9a9a9a" /><rect x="0" y="3.5" width="8" height="1.2" fill="#b4b4b4" /><rect x="0" y="6" width="8" height="1.2" fill="#a8a8a8" /><rect x="0" y="9.5" width="8" height="5.5" fill="#909090" /><rect x="3.5" y="1.5" width="3.5" height="1.5" fill="#fff" /><circle cx="5.2" cy="5" r="2.2" fill="#f0c898" stroke="none" stroke-width="1"/><rect x="3.3" y="2.6" width="3.8" height="0.9" fill="#888" /><path d="M2.300 12 q0 -4.500 3 -4.500 q3 0 3 4.500z" fill="#3e98e0"/><rect x="5" y="12" width="1" height="1" fill="#30e030" /><circle cx="10.7" cy="8" r="2.3" fill="#3a2008" stroke="none" stroke-width="1"/><circle cx="10.7" cy="8.8" r="1.5" fill="#d8a060" stroke="none" stroke-width="1"/><path d="M7.800 15 q0 -4.500 3 -4.500 q3 0 3 4.500z" fill="#2aa850"/></svg>
<span id="t45" class="t s" style="top:417px;font-size:11px;line-height:16px;height:16px;left:79px;letter-spacing:-0.113px;">Disk Administrators</span>
<div class="a" style="left:48px;top:441px;width:11px;height:1px;background:repeating-linear-gradient(to right,#7a7a7a 0 1px,transparent 1px 2px)"></div>
<svg class="a" style="left:61px;top:433px" width="16" height="16" viewBox="0 0 16 16"><rect x="0" y="1" width="8" height="1.2" fill="#9a9a9a" /><rect x="0" y="3.5" width="8" height="1.2" fill="#b4b4b4" /><rect x="0" y="6" width="8" height="1.2" fill="#a8a8a8" /><rect x="0" y="9.5" width="8" height="5.5" fill="#909090" /><rect x="3.5" y="1.5" width="3.5" height="1.5" fill="#fff" /><circle cx="5.2" cy="5" r="2.2" fill="#f0c898" stroke="none" stroke-width="1"/><rect x="3.3" y="2.6" width="3.8" height="0.9" fill="#888" /><path d="M2.300 12 q0 -4.500 3 -4.500 q3 0 3 4.500z" fill="#3e98e0"/><rect x="5" y="12" width="1" height="1" fill="#30e030" /><circle cx="10.7" cy="8" r="2.3" fill="#3a2008" stroke="none" stroke-width="1"/><circle cx="10.7" cy="8.8" r="1.5" fill="#d8a060" stroke="none" stroke-width="1"/><path d="M7.800 15 q0 -4.500 3 -4.500 q3 0 3 4.500z" fill="#2aa850"/></svg>
<span id="t46" class="t s" style="top:433px;font-size:11px;line-height:16px;height:16px;left:79px;letter-spacing:-0.113px;">Process Administrators</span>
<div class="a" style="left:48px;top:457px;width:11px;height:1px;background:repeating-linear-gradient(to right,#7a7a7a 0 1px,transparent 1px 2px)"></div>
<svg class="a" style="left:61px;top:449px" width="16" height="16" viewBox="0 0 16 16"><rect x="0" y="1" width="8" height="1.2" fill="#9a9a9a" /><rect x="0" y="3.5" width="8" height="1.2" fill="#b4b4b4" /><rect x="0" y="6" width="8" height="1.2" fill="#a8a8a8" /><rect x="0" y="9.5" width="8" height="5.5" fill="#909090" /><rect x="3.5" y="1.5" width="3.5" height="1.5" fill="#fff" /><circle cx="5.2" cy="5" r="2.2" fill="#f0c898" stroke="none" stroke-width="1"/><rect x="3.3" y="2.6" width="3.8" height="0.9" fill="#888" /><path d="M2.300 12 q0 -4.500 3 -4.500 q3 0 3 4.500z" fill="#3e98e0"/><rect x="5" y="12" width="1" height="1" fill="#30e030" /><circle cx="10.7" cy="8" r="2.3" fill="#3a2008" stroke="none" stroke-width="1"/><circle cx="10.7" cy="8.8" r="1.5" fill="#d8a060" stroke="none" stroke-width="1"/><path d="M7.800 15 q0 -4.500 3 -4.500 q3 0 3 4.500z" fill="#2aa850"/></svg>
<span id="t47" class="t s" style="top:449px;font-size:11px;line-height:16px;height:16px;left:79px;letter-spacing:-0.125px;">public</span>
<div class="a" style="left:48px;top:473px;width:11px;height:1px;background:repeating-linear-gradient(to right,#7a7a7a 0 1px,transparent 1px 2px)"></div>
<svg class="a" style="left:61px;top:465px" width="16" height="16" viewBox="0 0 16 16"><rect x="0" y="1" width="8" height="1.2" fill="#9a9a9a" /><rect x="0" y="3.5" width="8" height="1.2" fill="#b4b4b4" /><rect x="0" y="6" width="8" height="1.2" fill="#a8a8a8" /><rect x="0" y="9.5" width="8" height="5.5" fill="#909090" /><rect x="3.5" y="1.5" width="3.5" height="1.5" fill="#fff" /><circle cx="5.2" cy="5" r="2.2" fill="#f0c898" stroke="none" stroke-width="1"/><rect x="3.3" y="2.6" width="3.8" height="0.9" fill="#888" /><path d="M2.300 12 q0 -4.500 3 -4.500 q3 0 3 4.500z" fill="#3e98e0"/><rect x="5" y="12" width="1" height="1" fill="#30e030" /><circle cx="10.7" cy="8" r="2.3" fill="#3a2008" stroke="none" stroke-width="1"/><circle cx="10.7" cy="8.8" r="1.5" fill="#d8a060" stroke="none" stroke-width="1"/><path d="M7.800 15 q0 -4.500 3 -4.500 q3 0 3 4.500z" fill="#2aa850"/></svg>
<span id="t48" class="t s" style="top:465px;font-size:11px;line-height:16px;height:16px;left:79px;letter-spacing:-0.021px;">Security Administrators</span>
<div class="a" style="left:48px;top:489px;width:11px;height:1px;background:repeating-linear-gradient(to right,#7a7a7a 0 1px,transparent 1px 2px)"></div>
<svg class="a" style="left:61px;top:481px" width="16" height="16" viewBox="0 0 16 16"><rect x="0" y="1" width="8" height="1.2" fill="#9a9a9a" /><rect x="0" y="3.5" width="8" height="1.2" fill="#b4b4b4" /><rect x="0" y="6" width="8" height="1.2" fill="#a8a8a8" /><rect x="0" y="9.5" width="8" height="5.5" fill="#909090" /><rect x="3.5" y="1.5" width="3.5" height="1.5" fill="#fff" /><circle cx="5.2" cy="5" r="2.2" fill="#f0c898" stroke="none" stroke-width="1"/><rect x="3.3" y="2.6" width="3.8" height="0.9" fill="#888" /><path d="M2.300 12 q0 -4.500 3 -4.500 q3 0 3 4.500z" fill="#3e98e0"/><rect x="5" y="12" width="1" height="1" fill="#30e030" /><circle cx="10.7" cy="8" r="2.3" fill="#3a2008" stroke="none" stroke-width="1"/><circle cx="10.7" cy="8.8" r="1.5" fill="#d8a060" stroke="none" stroke-width="1"/><path d="M7.800 15 q0 -4.500 3 -4.500 q3 0 3 4.500z" fill="#2aa850"/></svg>
<span id="t49" class="t s" style="top:481px;font-size:11px;line-height:16px;height:16px;left:79px;letter-spacing:-0.007px;">Server Administrators</span>
<div class="a" style="left:48px;top:505px;width:11px;height:1px;background:repeating-linear-gradient(to right,#7a7a7a 0 1px,transparent 1px 2px)"></div>
<svg class="a" style="left:61px;top:497px" width="16" height="16" viewBox="0 0 16 16"><rect x="0" y="1" width="8" height="1.2" fill="#9a9a9a" /><rect x="0" y="3.5" width="8" height="1.2" fill="#b4b4b4" /><rect x="0" y="6" width="8" height="1.2" fill="#a8a8a8" /><rect x="0" y="9.5" width="8" height="5.5" fill="#909090" /><rect x="3.5" y="1.5" width="3.5" height="1.5" fill="#fff" /><circle cx="5.2" cy="5" r="2.2" fill="#f0c898" stroke="none" stroke-width="1"/><rect x="3.3" y="2.6" width="3.8" height="0.9" fill="#888" /><path d="M2.300 12 q0 -4.500 3 -4.500 q3 0 3 4.500z" fill="#3e98e0"/><rect x="5" y="12" width="1" height="1" fill="#30e030" /><circle cx="10.7" cy="8" r="2.3" fill="#3a2008" stroke="none" stroke-width="1"/><circle cx="10.7" cy="8.8" r="1.5" fill="#d8a060" stroke="none" stroke-width="1"/><path d="M7.800 15 q0 -4.500 3 -4.500 q3 0 3 4.500z" fill="#2aa850"/></svg>
<span id="t50" class="t s" style="top:497px;font-size:11px;line-height:16px;height:16px;left:79px;letter-spacing:-0.004px;">ServRoleIvan</span>
<div class="a" style="left:48px;top:521px;width:11px;height:1px;background:repeating-linear-gradient(to right,#7a7a7a 0 1px,transparent 1px 2px)"></div>
<svg class="a" style="left:61px;top:513px" width="16" height="16" viewBox="0 0 16 16"><rect x="0" y="1" width="8" height="1.2" fill="#9a9a9a" /><rect x="0" y="3.5" width="8" height="1.2" fill="#b4b4b4" /><rect x="0" y="6" width="8" height="1.2" fill="#a8a8a8" /><rect x="0" y="9.5" width="8" height="5.5" fill="#909090" /><rect x="3.5" y="1.5" width="3.5" height="1.5" fill="#fff" /><circle cx="5.2" cy="5" r="2.2" fill="#f0c898" stroke="none" stroke-width="1"/><rect x="3.3" y="2.6" width="3.8" height="0.9" fill="#888" /><path d="M2.300 12 q0 -4.500 3 -4.500 q3 0 3 4.500z" fill="#3e98e0"/><rect x="5" y="12" width="1" height="1" fill="#30e030" /><circle cx="10.7" cy="8" r="2.3" fill="#3a2008" stroke="none" stroke-width="1"/><circle cx="10.7" cy="8.8" r="1.5" fill="#d8a060" stroke="none" stroke-width="1"/><path d="M7.800 15 q0 -4.500 3 -4.500 q3 0 3 4.500z" fill="#2aa850"/></svg>
<span id="t51" class="t s" style="top:513px;font-size:11px;line-height:16px;height:16px;left:79px;letter-spacing:0.125px;">Setup Administrators</span>
</div>
<div class="a" style="left:13px;top:641px;width:68px;height:21px;border:1px solid #a0a0a0;border-top:none;background:#e6e6e6;"></div>
<svg class="a" style="left:21px;top:645px" width="8" height="15" viewBox="0 0 8 15"><rect x="0" y="0" width="8" height="1" fill="#8a8a8a" /><rect x="0" y="2" width="8" height="1" fill="#b4b4b4" /><rect x="0" y="4" width="8" height="2" fill="#a8a8a8" /><rect x="0" y="7" width="8" height="1" fill="#bdbdbd" /><rect x="0" y="9" width="8" height="6" fill="#8e8e8e" /><rect x="5" y="11" width="1" height="1" fill="#30e030" /></svg>
<span id="t52" class="t s" style="top:644px;font-size:11px;line-height:16px;height:16px;left:38px;letter-spacing:0.013px;">Servers</span>
<svg class="a" style="left:88px;top:645px" width="14" height="14" viewBox="0 0 14 14"><path d="M3.500 .5 h10 v2 h-1.500 v10.500 h-10 q-1.500 -1.500 0 -3 h1.500 v-8 q0 -1.500 -1 -1.500z" fill="#f8f8f8" stroke="#909090"/><line x1="6" y1="4.5" x2="10.5" y2="4.5" stroke="#4a98d0" stroke-width="1" /><line x1="6" y1="6.5" x2="10.5" y2="6.5" stroke="#4a98d0" stroke-width="1" /><line x1="6" y1="8.5" x2="10.5" y2="8.5" stroke="#4a98d0" stroke-width="1" /><line x1="6" y1="10.5" x2="10.5" y2="10.5" stroke="#4a98d0" stroke-width="1" /></svg>
<span id="t53" class="t s" style="top:644px;font-size:11px;line-height:16px;height:16px;left:106px;letter-spacing:-0.247px;">Files</span>
<div class="a" style="left:131px;top:644px;width:1px;height:17px;background:#a8a8a8;"></div>
<svg class="a" style="left:139px;top:644px" width="16" height="14" viewBox="0 0 16 14"><path d="M.5 2.500 h5 l1.500 2 h6 v8 h-12.500z" fill="#fbe8a8" stroke="#e0b850"/><path d="M2.500 6.500 h13 l-2.500 6.500 h-12.500z" fill="#6cb8f0" stroke="#3c8cd0"/></svg>
<span id="t54" class="t s" style="top:644px;font-size:11px;line-height:16px;height:16px;left:158px;letter-spacing:0.031px;">Projects</span>
<div class="a" style="left:201px;top:644px;width:1px;height:17px;background:#a8a8a8;"></div>
<div class="a" style="left:242px;top:79px;width:724px;height:23px;background:#fff;"></div>
<div class="a" style="left:242px;top:101px;width:724px;height:563px;border:1px solid #a0a0a0;background:#f0f0f0;"></div>
<div class="a" style="left:250px;top:81px;width:301px;height:21px;border:1px solid #a0a0a0;border-bottom:none;background:#e4e4e4;"></div>
<svg class="a" style="left:257px;top:84px" width="14" height="14" viewBox="0 0 14 14"><rect x="1" y="0" width="12" height="11" fill="#d8ecf8" /><rect x="1" y="0" width="12" height="2.7" fill="#3c78c8" /><rect x="2" y="1" width="10" height="0.8" fill="#a8d0f8" /><rect x="1" y="2.7" width="1" height="8.3" fill="#c8a050" /><rect x="12" y="2.7" width="1" height="8.3" fill="#c8a050" /><path d="M1 13 v-4 q0 -2 2 -2 h2" fill="none" stroke="#2a2a2a" stroke-width="2.400"/><path d="M1 13 v-4 q0 -2 2 -2 h2" fill="none" stroke="#c8c8b8" stroke-width=".9"/><path d="M4.500 5 h3 l2 -1 v8 l-2 -1 h-3z" fill="#8a8a80" stroke="#2a2a2a" stroke-width=".9"/><rect x="9.5" y="5.8" width="3" height="1.5" fill="#f8b020" /><rect x="9.5" y="8.8" width="3" height="1.5" fill="#f8b020" /><rect x="9.5" y="5.8" width="1.2" height="1.5" fill="#f8f040" /><rect x="9.5" y="8.8" width="1.2" height="1.5" fill="#f8f040" /></svg>
<span id="t55" class="t b" style="top:83px;font-size:11px;line-height:16px;height:16px;left:276px;letter-spacing:0.220px;">sa@MS SQL SERVER 2012 [Session Manager]</span>
<svg class="a" style="left:535px;top:87px" width="9" height="9" viewBox="0 0 9 9"><path d="M1 1 L8 8 M8 1 L1 8" stroke="#111" stroke-width="1.600" fill="none"/></svg>
<svg class="a" style="left:918px;top:86px" width="6" height="9" viewBox="0 0 6 9"><path d="M5.500 .5 L.8 4.500 L5.500 8.500z" fill="none" stroke="#111" stroke-width="1"/></svg>
<svg class="a" style="left:935px;top:86px" width="6" height="9" viewBox="0 0 6 9"><path d="M.5 .5 L5.200 4.500 L.5 8.500z" fill="none" stroke="#111" stroke-width="1"/></svg>
<svg class="a" style="left:949px;top:86px" width="8" height="9" viewBox="0 0 8 9"><rect x=".5" y=".5" width="7" height="8" fill="#fff" stroke="#111"/><path d="M2 3 h4 M2 4.500 h4 M2 6 h4" stroke="#111" stroke-width="1"/></svg>
<svg class="a" style="left:972px;top:85px" width="14" height="10" viewBox="0 0 14 10"><rect x="0.5" y="0.5" width="13" height="9" fill="#fff" stroke="#c0c0c0" stroke-width="1"/><rect x="0" y="0" width="14" height="2" fill="#58a8e0" /><line x1="0" y1="4.5" x2="14" y2="4.5" stroke="#c0c0c0" stroke-width="1" /><line x1="0" y1="7.5" x2="14" y2="7.5" stroke="#c0c0c0" stroke-width="1" /><line x1="3.5" y1="2" x2="3.5" y2="10" stroke="#c0c0c0" stroke-width="1" /><line x1="7" y1="2" x2="7" y2="10" stroke="#c0c0c0" stroke-width="1" /><line x1="10.5" y1="2" x2="10.5" y2="10" stroke="#c0c0c0" stroke-width="1" /></svg>
<span class="t" style="left:972px;top:101px;font-size:11px;line-height:14px;writing-mode:vertical-rl;">Detail</span>
<svg class="a" style="left:249px;top:113px" width="16" height="16" viewBox="0 0 16 16"><path d="M9.600 2 A5.200 5.200 0 0 0 3.100 10.800" fill="none" stroke="#4898d0" stroke-width="2.400"/><path d="M0 10.200 h6.800 l-5.800 4.300z" fill="#4090c8"/><path d="M5.400 13 A5.200 5.200 0 0 0 11.900 4.200" fill="none" stroke="#4898d0" stroke-width="2.400"/><path d="M15 4.800 h-6.800 l5.800 -4.300z" fill="#4090c8"/></svg>
<svg class="a" style="left:270px;top:112px" width="16" height="16" viewBox="0 0 16 16"><g transform="translate(7.6 7.8) rotate(-45) scale(1.1)"><line x1="-9.5" y1="0" x2="-4" y2="0" stroke="#505050" stroke-width="1.2" /><path d="M1.500 -3.900 h-2.500 q-4.300 .2 -4.300 3.900 q0 3.700 4.300 3.900 h2.500z" fill="#eca850"/><rect x="1.2" y="-5" width="2.2" height="10" fill="#e8a040" /><rect x="1.3" y="-5" width="0.9" height="10" fill="#f8dcb0" /><line x1="3.4" y1="-1.9" x2="8" y2="-1.9" stroke="#606060" stroke-width="1.1" /><line x1="3.4" y1="1.9" x2="8" y2="1.9" stroke="#606060" stroke-width="1.1" /></g><path d="M4.500 9 h2.500 v-1.500 l4.500 3.500 l-2 .5 l1 3 l-2.500 1 l-1 -3 l-2.500 1z" fill="#f8d050" stroke="#d8a828" stroke-width=".6"/></svg>
<svg class="a" style="left:292px;top:113px" width="16" height="16" viewBox="0 0 16 16"><rect x="1.5" y="0.5" width="7" height="9" fill="#fbf6e0" stroke="#8c7c3c" stroke-width="1"/><path d="M6.500 3.500 h5 l3 3 v6.500 h-8z" fill="#fbf6e0" stroke="#8c7c3c"/><path d="M11.500 3.500 v3 h3" fill="#f0c890" stroke="#8c7c3c" stroke-width=".8"/><rect x="0.5" y="4.5" width="9" height="3" fill="#fff" stroke="#8c7c3c" stroke-width="1"/><line x1="2" y1="6" x2="8" y2="6" stroke="#333" stroke-width="1.2" /><line x1="9" y1="9.5" x2="13" y2="9.5" stroke="#3878b8" stroke-width="1" /><line x1="9" y1="11.5" x2="13" y2="11.5" stroke="#3878b8" stroke-width="1" /></svg>
<div class="a" style="left:313px;top:105px;width:1px;height:30px;background:#a0a0a0;"></div>
<span id="t56" class="t s" style="top:107px;font-size:11px;line-height:16px;height:16px;left:320px;letter-spacing:-0.109px;">Refresh (secs)</span>
<div class="a" style="left:396px;top:105px;width:50px;height:20px;border:1px solid #abadb3;background:#fff;"></div>
<span id="t57" class="t s" style="top:107px;font-size:11px;line-height:16px;height:16px;right:572px;">10</span>
<div class="a" style="left:429px;top:107px;width:15px;height:8px;border:1px solid #acacac;background:#e9e9e9;"></div>
<div class="a" style="left:429px;top:115px;width:15px;height:8px;border:1px solid #acacac;background:#e9e9e9;"></div>
<svg class="a" style="left:434px;top:109px" width="5" height="3" viewBox="0 0 5 3"><path d="M0 3 h5 l-2.500 -3z" fill="#000"/></svg>
<svg class="a" style="left:434px;top:118px" width="5" height="3" viewBox="0 0 5 3"><path d="M0 0 h5 l-2.500 3z" fill="#000"/></svg>
<div class="a" style="left:455px;top:109px;width:13px;height:13px;border:1px solid #707070;background:#fff;"></div>
<span id="t58" class="t s" style="top:107px;font-size:11px;line-height:16px;height:16px;left:472px;letter-spacing:-0.016px;">Auto Refresh data?</span>
<div class="a" style="left:577px;top:105px;width:1px;height:30px;background:#a0a0a0;"></div>
<div class="a" style="left:796px;top:109px;width:162px;height:22px;border:1px solid #abadb3;background:#fff;"></div>
<svg class="a" style="left:799px;top:114px" width="18" height="13" viewBox="0 0 18 13"><circle cx="5" cy="5" r="4" fill="none" stroke="#a0a0a0" stroke-width="1.900"/><path d="M8 8 L11.500 11.500" stroke="#a0a0a0" stroke-width="2.100"/><path d="M12 5 h5 l-2.500 3z" fill="#a0a0a0"/></svg>
<svg class="a" style="left:257px;top:142px" width="16" height="16" viewBox="0 0 16 16"><g transform="translate(7.6 7.8) rotate(-45) scale(1.1)"><line x1="-9.5" y1="0" x2="-4" y2="0" stroke="#505050" stroke-width="1.2" /><path d="M1.500 -3.900 h-2.500 q-4.300 .2 -4.300 3.900 q0 3.700 4.300 3.900 h2.500z" fill="#eca850"/><rect x="1.2" y="-5" width="2.2" height="10" fill="#e8a040" /><rect x="1.3" y="-5" width="0.9" height="10" fill="#f8dcb0" /><line x1="3.4" y1="-1.9" x2="8" y2="-1.9" stroke="#606060" stroke-width="1.1" /><line x1="3.4" y1="1.9" x2="8" y2="1.9" stroke="#606060" stroke-width="1.1" /></g></svg>
<span id="t59" class="t s" style="top:141px;font-size:11px;line-height:16px;height:16px;left:276px;letter-spacing:-0.330px;">Sessions</span>
<div class="a" style="left:333px;top:139px;width:104px;height:21px;border:1px solid #a0a0a0;border-bottom:none;background:#e4e4e4;"></div>
<svg class="a" style="left:340px;top:141px" width="16" height="16" viewBox="0 0 16 16"><line x1="-0.8" y1="14.8" x2="3" y2="10" stroke="#505050" stroke-width="1.2" /><g transform="translate(7.6 6) rotate(-45) scale(0.95)"><line x1="-9.5" y1="0" x2="-4" y2="0" stroke="#505050" stroke-width="1.2" /><path d="M1.500 -3.900 h-2.500 q-4.300 .2 -4.300 3.900 q0 3.700 4.300 3.900 h2.500z" fill="#eca850"/><rect x="1.2" y="-5" width="2.2" height="10" fill="#e8a040" /><rect x="1.3" y="-5" width="0.9" height="10" fill="#f8dcb0" /><line x1="3.4" y1="-1.9" x2="8" y2="-1.9" stroke="#606060" stroke-width="1.1" /><line x1="3.4" y1="1.9" x2="8" y2="1.9" stroke="#606060" stroke-width="1.1" /></g><text x="2.800" y="15" font-family="Liberation Sans,sans-serif" font-size="7.500" font-weight="bold" fill="#000070" letter-spacing="-.2">010</text></svg>
<span id="t60" class="t s" style="top:141px;font-size:11px;line-height:16px;height:16px;left:358px;letter-spacing:-0.174px;">Session Stats</span>
<svg class="a" style="left:447px;top:144px" width="9" height="12" viewBox="0 0 9 12"><path d="M2.500 5 v-1.500 q2 -3 4 0 v1.500" fill="none" stroke="#d8a020" stroke-width="1.300"/><rect x=".7" y="4.700" width="7.600" height="5.600" rx="1" fill="#fff8e0" stroke="#d8a020" stroke-width="1.400"/><rect x="4" y="6.5" width="1" height="2" fill="#a07010" /></svg>
<span id="t61" class="t s" style="top:141px;font-size:11px;line-height:16px;height:16px;left:462px;letter-spacing:-0.350px;">Locks</span>
<div class="a" style="left:501px;top:141px;width:1px;height:17px;background:#b0b0b0;"></div>
<div class="a" style="left:244px;top:159px;width:720px;height:503px;border:1px solid #a0a0a0;background:#f0f0f0;"></div>
<div class="a" style="left:246px;top:161px;width:716px;height:499px;border:1px solid #7a8494;background:#f0f0f0;"></div>
<div class="a" style="left:247px;top:162px;width:698px;height:481px;overflow:hidden;background:#fff">
<div class="a" style="left:0;top:0;width:697px;height:24px;background:#fbfcfd;border-bottom:1px solid #e0e8f4"></div>
<div class="a" style="left:0;top:24px;width:50px;height:460px;background:#f0f0f0"></div>
<div class="a" style="left:49px;top:0;width:2px;height:23px;background:linear-gradient(to right,#e3eaf4 0 1px,#f0f4fa 1px 2px)"></div>
<div class="a" style="left:114px;top:0;width:2px;height:23px;background:linear-gradient(to right,#e3eaf4 0 1px,#f0f4fa 1px 2px)"></div>
<div class="a" style="left:115px;top:24px;width:1px;height:460px;background:#ededed"></div>
<div class="a" style="left:185px;top:0;width:2px;height:23px;background:linear-gradient(to right,#e3eaf4 0 1px,#f0f4fa 1px 2px)"></div>
<div class="a" style="left:186px;top:24px;width:1px;height:460px;background:#ededed"></div>
<div class="a" style="left:226px;top:0;width:2px;height:23px;background:linear-gradient(to right,#e3eaf4 0 1px,#f0f4fa 1px 2px)"></div>
<div class="a" style="left:227px;top:24px;width:1px;height:460px;background:#ededed"></div>
<div class="a" style="left:290px;top:0;width:2px;height:23px;background:linear-gradient(to right,#e3eaf4 0 1px,#f0f4fa 1px 2px)"></div>
<div class="a" style="left:291px;top:24px;width:1px;height:460px;background:#ededed"></div>
<div class="a" style="left:370px;top:0;width:2px;height:23px;background:linear-gradient(to right,#e3eaf4 0 1px,#f0f4fa 1px 2px)"></div>
<div class="a" style="left:371px;top:24px;width:1px;height:460px;background:#ededed"></div>
<div class="a" style="left:481px;top:0;width:2px;height:23px;background:linear-gradient(to right,#e3eaf4 0 1px,#f0f4fa 1px 2px)"></div>
<div class="a" style="left:482px;top:24px;width:1px;height:460px;background:#ededed"></div>
<div class="a" style="left:598px;top:0;width:2px;height:23px;background:linear-gradient(to right,#e3eaf4 0 1px,#f0f4fa 1px 2px)"></div>
<div class="a" style="left:599px;top:24px;width:1px;height:460px;background:#ededed"></div>
<span id="t62" class="t s" style="top:5px;font-size:11px;line-height:16px;height:16px;left:54px;letter-spacing:-0.180px;">Process ID</span>
<span id="t63" class="t s" style="top:5px;font-size:11px;line-height:16px;height:16px;left:120px;letter-spacing:0.103px;">Context ID</span>
<span id="t64" class="t s" style="top:5px;font-size:11px;line-height:16px;height:16px;left:191px;letter-spacing:-0.059px;">User</span>
<span id="t65" class="t s" style="top:5px;font-size:11px;line-height:16px;height:16px;left:232px;letter-spacing:-0.012px;">Database</span>
<span id="t66" class="t s" style="top:5px;font-size:11px;line-height:16px;height:16px;left:296px;letter-spacing:-0.031px;">Status</span>
<span id="t67" class="t s" style="top:5px;font-size:11px;line-height:16px;height:16px;left:376px;letter-spacing:-0.079px;">Open Transactions</span>
<span id="t68" class="t s" style="top:5px;font-size:11px;line-height:16px;height:16px;left:487px;letter-spacing:-0.393px;">Command</span>
<span id="t69" class="t s" style="top:5px;font-size:11px;line-height:16px;height:16px;left:604px;letter-spacing:0.379px;">Application</span>
<div class="a" style="left:50px;top:40px;width:647px;height:1px;background:#ededed"></div>
<span id="t70" class="t s" style="top:24px;font-size:11px;line-height:16px;height:16px;right:669px;">1</span>
<span id="t71" class="t s" style="top:24px;font-size:11px;line-height:16px;height:16px;left:51px;">19</span>
<span id="t72" class="t s" style="top:24px;font-size:11px;line-height:16px;height:16px;right:514px;">0</span>
<span id="t73" class="t s" style="top:24px;font-size:11px;line-height:16px;height:16px;left:228px;letter-spacing:0.062px;">master</span>
<span id="t74" class="t s" style="top:24px;font-size:11px;line-height:16px;height:16px;left:292px;letter-spacing:-0.123px;">sleeping</span>
<span id="t75" class="t s" style="top:24px;font-size:11px;line-height:16px;height:16px;right:218px;">0</span>
<span id="t76" class="t s" style="top:24px;font-size:11px;line-height:16px;height:16px;left:483px;letter-spacing:-0.799px;">TASK MANAGER</span>
<div class="a" style="left:50px;top:56px;width:647px;height:1px;background:#ededed"></div>
<span id="t77" class="t s" style="top:40px;font-size:11px;line-height:16px;height:16px;right:669px;">2</span>
<span id="t78" class="t s" style="top:40px;font-size:11px;line-height:16px;height:16px;left:51px;">55</span>
<span id="t79" class="t s" style="top:40px;font-size:11px;line-height:16px;height:16px;right:514px;">0</span>
<span id="t80" class="t s" style="top:40px;font-size:11px;line-height:16px;height:16px;left:228px;letter-spacing:0.062px;">master</span>
<span id="t81" class="t s" style="top:40px;font-size:11px;line-height:16px;height:16px;left:292px;letter-spacing:-0.104px;">runnable</span>
<span id="t82" class="t s" style="top:40px;font-size:11px;line-height:16px;height:16px;right:218px;">0</span>
<span id="t83" class="t s" style="top:40px;font-size:11px;line-height:16px;height:16px;left:483px;letter-spacing:-1.133px;">SELECT</span>
<span id="t84" class="t s" style="top:40px;font-size:11px;line-height:16px;height:16px;left:601px;letter-spacing:-0.147px;">Aqua_Data_Studio</span>
<div class="a" style="left:50px;top:72px;width:647px;height:1px;background:#ededed"></div>
<span id="t85" class="t s" style="top:56px;font-size:11px;line-height:16px;height:16px;right:669px;">3</span>
<span id="t86" class="t s" style="top:56px;font-size:11px;line-height:16px;height:16px;left:51px;">35</span>
<span id="t87" class="t s" style="top:56px;font-size:11px;line-height:16px;height:16px;right:514px;">0</span>
<span id="t88" class="t s" style="top:56px;font-size:11px;line-height:16px;height:16px;left:228px;letter-spacing:0.062px;">master</span>
<span id="t89" class="t s" style="top:56px;font-size:11px;line-height:16px;height:16px;left:292px;letter-spacing:-0.050px;">background</span>
<span id="t90" class="t s" style="top:56px;font-size:11px;line-height:16px;height:16px;right:218px;">0</span>
<span id="t91" class="t s" style="top:56px;font-size:11px;line-height:16px;height:16px;left:483px;letter-spacing:-0.760px;">BRKR TASK</span>
<div class="a" style="left:50px;top:88px;width:647px;height:1px;background:#ededed"></div>
<span id="t92" class="t s" style="top:72px;font-size:11px;line-height:16px;height:16px;right:669px;">4</span>
<span id="t93" class="t s" style="top:72px;font-size:11px;line-height:16px;height:16px;left:51px;">17</span>
<span id="t94" class="t s" style="top:72px;font-size:11px;line-height:16px;height:16px;right:514px;">0</span>
<span id="t95" class="t s" style="top:72px;font-size:11px;line-height:16px;height:16px;left:228px;letter-spacing:0.062px;">master</span>
<span id="t96" class="t s" style="top:72px;font-size:11px;line-height:16px;height:16px;left:292px;letter-spacing:-0.050px;">background</span>
<span id="t97" class="t s" style="top:72px;font-size:11px;line-height:16px;height:16px;right:218px;">0</span>
<span id="t98" class="t s" style="top:72px;font-size:11px;line-height:16px;height:16px;left:483px;letter-spacing:-0.812px;">CHECKPOINT</span>
<div class="a" style="left:50px;top:104px;width:647px;height:1px;background:#ededed"></div>
<span id="t99" class="t s" style="top:88px;font-size:11px;line-height:16px;height:16px;right:669px;">5</span>
<span id="t100" class="t s" style="top:88px;font-size:11px;line-height:16px;height:16px;left:51px;">18</span>
<span id="t101" class="t s" style="top:88px;font-size:11px;line-height:16px;height:16px;right:514px;">0</span>
<span id="t102" class="t s" style="top:88px;font-size:11px;line-height:16px;height:16px;left:228px;letter-spacing:0.062px;">master</span>
<span id="t103" class="t s" style="top:88px;font-size:11px;line-height:16px;height:16px;left:292px;letter-spacing:-0.123px;">sleeping</span>
<span id="t104" class="t s" style="top:88px;font-size:11px;line-height:16px;height:16px;right:218px;">0</span>
<span id="t105" class="t s" style="top:88px;font-size:11px;line-height:16px;height:16px;left:483px;letter-spacing:-0.799px;">TASK MANAGER</span>
<div class="a" style="left:50px;top:120px;width:647px;height:1px;background:#ededed"></div>
<span id="t106" class="t s" style="top:104px;font-size:11px;line-height:16px;height:16px;right:669px;">6</span>
<span id="t107" class="t s" style="top:104px;font-size:11px;line-height:16px;height:16px;left:51px;">33</span>
<span id="t108" class="t s" style="top:104px;font-size:11px;line-height:16px;height:16px;right:514px;">0</span>
<span id="t109" class="t s" style="top:104px;font-size:11px;line-height:16px;height:16px;left:228px;letter-spacing:0.062px;">master</span>
<span id="t110" class="t s" style="top:104px;font-size:11px;line-height:16px;height:16px;left:292px;letter-spacing:-0.050px;">background</span>
<span id="t111" class="t s" style="top:104px;font-size:11px;line-height:16px;height:16px;right:218px;">0</span>
<span id="t112" class="t s" style="top:104px;font-size:11px;line-height:16px;height:16px;left:483px;letter-spacing:-0.760px;">BRKR TASK</span>
<div class="a" style="left:50px;top:136px;width:647px;height:1px;background:#ededed"></div>
<span id="t113" class="t s" style="top:120px;font-size:11px;line-height:16px;height:16px;right:669px;">7</span>
<span id="t114" class="t s" style="top:120px;font-size:11px;line-height:16px;height:16px;left:51px;">15</span>
<span id="t115" class="t s" style="top:120px;font-size:11px;line-height:16px;height:16px;right:514px;">0</span>
<span id="t116" class="t s" style="top:120px;font-size:11px;line-height:16px;height:16px;left:292px;letter-spacing:-0.050px;">background</span>
<span id="t117" class="t s" style="top:120px;font-size:11px;line-height:16px;height:16px;right:218px;">0</span>
<span id="t118" class="t s" style="top:120px;font-size:11px;line-height:16px;height:16px;left:483px;letter-spacing:-0.739px;">UNKNOWN TOKEN</span>
<div class="a" style="left:50px;top:152px;width:647px;height:1px;background:#ededed"></div>
<span id="t119" class="t s" style="top:136px;font-size:11px;line-height:16px;height:16px;right:669px;">8</span>
<span id="t120" class="t s" style="top:136px;font-size:11px;line-height:16px;height:16px;left:51px;">34</span>
<span id="t121" class="t s" style="top:136px;font-size:11px;line-height:16px;height:16px;right:514px;">0</span>
<span id="t122" class="t s" style="top:136px;font-size:11px;line-height:16px;height:16px;left:228px;letter-spacing:0.062px;">master</span>
<span id="t123" class="t s" style="top:136px;font-size:11px;line-height:16px;height:16px;left:292px;letter-spacing:-0.050px;">background</span>
<span id="t124" class="t s" style="top:136px;font-size:11px;line-height:16px;height:16px;right:218px;">0</span>
<span id="t125" class="t s" style="top:136px;font-size:11px;line-height:16px;height:16px;left:483px;letter-spacing:-0.760px;">BRKR TASK</span>
<div class="a" style="left:50px;top:168px;width:647px;height:1px;background:#ededed"></div>
<span id="t126" class="t s" style="top:152px;font-size:11px;line-height:16px;height:16px;right:669px;">9</span>
<span id="t127" class="t s" style="top:152px;font-size:11px;line-height:16px;height:16px;left:51px;">16</span>
<span id="t128" class="t s" style="top:152px;font-size:11px;line-height:16px;height:16px;right:514px;">0</span>
<span id="t129" class="t s" style="top:152px;font-size:11px;line-height:16px;height:16px;left:228px;letter-spacing:0.062px;">master</span>
<span id="t130" class="t s" style="top:152px;font-size:11px;line-height:16px;height:16px;left:292px;letter-spacing:-0.050px;">background</span>
<span id="t131" class="t s" style="top:152px;font-size:11px;line-height:16px;height:16px;right:218px;">0</span>
<span id="t132" class="t s" style="top:152px;font-size:11px;line-height:16px;height:16px;left:483px;letter-spacing:-0.799px;">TASK MANAGER</span>
<div class="a" style="left:50px;top:184px;width:647px;height:1px;background:#ededed"></div>
<span id="t133" class="t s" style="top:168px;font-size:11px;line-height:16px;height:16px;right:669px;">10</span>
<span id="t134" class="t s" style="top:168px;font-size:11px;line-height:16px;height:16px;left:51px;">13</span>
<span id="t135" class="t s" style="top:168px;font-size:11px;line-height:16px;height:16px;right:514px;">0</span>
<span id="t136" class="t s" style="top:168px;font-size:11px;line-height:16px;height:16px;left:292px;letter-spacing:-0.050px;">background</span>
<span id="t137" class="t s" style="top:168px;font-size:11px;line-height:16px;height:16px;right:218px;">0</span>
<span id="t138" class="t s" style="top:168px;font-size:11px;line-height:16px;height:16px;left:483px;letter-spacing:-0.900px;">RECEIVE</span>
<div class="a" style="left:50px;top:200px;width:647px;height:1px;background:#ededed"></div>
<span id="t139" class="t s" style="top:184px;font-size:11px;line-height:16px;height:16px;right:669px;">11</span>
<span id="t140" class="t s" style="top:184px;font-size:11px;line-height:16px;height:16px;left:51px;">14</span>
<span id="t141" class="t s" style="top:184px;font-size:11px;line-height:16px;height:16px;right:514px;">0</span>
<span id="t142" class="t s" style="top:184px;font-size:11px;line-height:16px;height:16px;left:228px;letter-spacing:0.062px;">master</span>
<span id="t143" class="t s" style="top:184px;font-size:11px;line-height:16px;height:16px;left:292px;letter-spacing:-0.123px;">sleeping</span>
<span id="t144" class="t s" style="top:184px;font-size:11px;line-height:16px;height:16px;right:218px;">0</span>
<span id="t145" class="t s" style="top:184px;font-size:11px;line-height:16px;height:16px;left:483px;letter-spacing:-0.799px;">TASK MANAGER</span>
<div class="a" style="left:50px;top:216px;width:647px;height:1px;background:#ededed"></div>
<span id="t146" class="t s" style="top:200px;font-size:11px;line-height:16px;height:16px;right:669px;">12</span>
<span id="t147" class="t s" style="top:200px;font-size:11px;line-height:16px;height:16px;left:51px;">11</span>
<span id="t148" class="t s" style="top:200px;font-size:11px;line-height:16px;height:16px;right:514px;">0</span>
<span id="t149" class="t s" style="top:200px;font-size:11px;line-height:16px;height:16px;left:228px;letter-spacing:0.062px;">master</span>
<span id="t150" class="t s" style="top:200px;font-size:11px;line-height:16px;height:16px;left:292px;letter-spacing:-0.050px;">background</span>
<span id="t151" class="t s" style="top:200px;font-size:11px;line-height:16px;height:16px;right:218px;">0</span>
<span id="t152" class="t s" style="top:200px;font-size:11px;line-height:16px;height:16px;left:483px;letter-spacing:-0.702px;">TRACE QUEUE TASK</span>
<div class="a" style="left:50px;top:232px;width:647px;height:1px;background:#ededed"></div>
<span id="t153" class="t s" style="top:216px;font-size:11px;line-height:16px;height:16px;right:669px;">13</span>
<span id="t154" class="t s" style="top:216px;font-size:11px;line-height:16px;height:16px;left:51px;">12</span>
<span id="t155" class="t s" style="top:216px;font-size:11px;line-height:16px;height:16px;right:514px;">0</span>
<span id="t156" class="t s" style="top:216px;font-size:11px;line-height:16px;height:16px;left:292px;letter-spacing:-0.050px;">background</span>
<span id="t157" class="t s" style="top:216px;font-size:11px;line-height:16px;height:16px;right:218px;">0</span>
<span id="t158" class="t s" style="top:216px;font-size:11px;line-height:16px;height:16px;left:483px;letter-spacing:-0.799px;">SYSTEM_HEALTH_MO</span>
<div class="a" style="left:50px;top:248px;width:647px;height:1px;background:#ededed"></div>
<span id="t159" class="t s" style="top:232px;font-size:11px;line-height:16px;height:16px;right:669px;">14</span>
<span id="t160" class="t s" style="top:232px;font-size:11px;line-height:16px;height:16px;left:51px;">21</span>
<span id="t161" class="t s" style="top:232px;font-size:11px;line-height:16px;height:16px;right:514px;">0</span>
<span id="t162" class="t s" style="top:232px;font-size:11px;line-height:16px;height:16px;left:228px;letter-spacing:0.062px;">master</span>
<span id="t163" class="t s" style="top:232px;font-size:11px;line-height:16px;height:16px;left:292px;letter-spacing:-0.123px;">sleeping</span>
<span id="t164" class="t s" style="top:232px;font-size:11px;line-height:16px;height:16px;right:218px;">0</span>
<span id="t165" class="t s" style="top:232px;font-size:11px;line-height:16px;height:16px;left:483px;letter-spacing:-0.799px;">TASK MANAGER</span>
<div class="a" style="left:50px;top:264px;width:647px;height:1px;background:#ededed"></div>
<span id="t166" class="t s" style="top:248px;font-size:11px;line-height:16px;height:16px;right:669px;">15</span>
<span id="t167" class="t s" style="top:248px;font-size:11px;line-height:16px;height:16px;left:51px;">20</span>
<span id="t168" class="t s" style="top:248px;font-size:11px;line-height:16px;height:16px;right:514px;">0</span>
<span id="t169" class="t s" style="top:248px;font-size:11px;line-height:16px;height:16px;left:228px;letter-spacing:0.062px;">master</span>
<span id="t170" class="t s" style="top:248px;font-size:11px;line-height:16px;height:16px;left:292px;letter-spacing:-0.123px;">sleeping</span>
<span id="t171" class="t s" style="top:248px;font-size:11px;line-height:16px;height:16px;right:218px;">0</span>
<span id="t172" class="t s" style="top:248px;font-size:11px;line-height:16px;height:16px;left:483px;letter-spacing:-0.799px;">TASK MANAGER</span>
<div class="a" style="left:50px;top:280px;width:647px;height:1px;background:#ededed"></div>
<span id="t173" class="t s" style="top:264px;font-size:11px;line-height:16px;height:16px;right:669px;">16</span>
<span id="t174" class="t s" style="top:264px;font-size:11px;line-height:16px;height:16px;left:51px;">22</span>
<span id="t175" class="t s" style="top:264px;font-size:11px;line-height:16px;height:16px;right:514px;">0</span>
<span id="t176" class="t s" style="top:264px;font-size:11px;line-height:16px;height:16px;left:228px;letter-spacing:0.062px;">master</span>
<span id="t177" class="t s" style="top:264px;font-size:11px;line-height:16px;height:16px;left:292px;letter-spacing:-0.123px;">sleeping</span>
<span id="t178" class="t s" style="top:264px;font-size:11px;line-height:16px;height:16px;right:218px;">0</span>
<span id="t179" class="t s" style="top:264px;font-size:11px;line-height:16px;height:16px;left:483px;letter-spacing:-0.799px;">TASK MANAGER</span>
<div class="a" style="left:50px;top:296px;width:647px;height:1px;background:#ededed"></div>
<span id="t180" class="t s" style="top:280px;font-size:11px;line-height:16px;height:16px;right:669px;">17</span>
<span id="t181" class="t s" style="top:280px;font-size:11px;line-height:16px;height:16px;left:51px;">23</span>
<span id="t182" class="t s" style="top:280px;font-size:11px;line-height:16px;height:16px;right:514px;">0</span>
<span id="t183" class="t s" style="top:280px;font-size:11px;line-height:16px;height:16px;left:228px;letter-spacing:0.062px;">master</span>
<span id="t184" class="t s" style="top:280px;font-size:11px;line-height:16px;height:16px;left:292px;letter-spacing:-0.050px;">background</span>
<span id="t185" class="t s" style="top:280px;font-size:11px;line-height:16px;height:16px;right:218px;">0</span>
<span id="t186" class="t s" style="top:280px;font-size:11px;line-height:16px;height:16px;left:483px;letter-spacing:-0.495px;">FT CRAWL MON</span>
<div class="a" style="left:50px;top:312px;width:647px;height:1px;background:#ededed"></div>
<span id="t187" class="t s" style="top:296px;font-size:11px;line-height:16px;height:16px;right:669px;">18</span>
<span id="t188" class="t s" style="top:296px;font-size:11px;line-height:16px;height:16px;left:51px;">25</span>
<span id="t189" class="t s" style="top:296px;font-size:11px;line-height:16px;height:16px;right:514px;">0</span>
<span id="t190" class="t s" style="top:296px;font-size:11px;line-height:16px;height:16px;left:292px;letter-spacing:-0.050px;">background</span>
<span id="t191" class="t s" style="top:296px;font-size:11px;line-height:16px;height:16px;right:218px;">0</span>
<span id="t192" class="t s" style="top:296px;font-size:11px;line-height:16px;height:16px;left:483px;letter-spacing:-0.692px;">XE DISPATCHER</span>
<div class="a" style="left:50px;top:328px;width:647px;height:1px;background:#ededed"></div>
<span id="t193" class="t s" style="top:312px;font-size:11px;line-height:16px;height:16px;right:669px;">19</span>
<span id="t194" class="t s" style="top:312px;font-size:11px;line-height:16px;height:16px;left:51px;">26</span>
<span id="t195" class="t s" style="top:312px;font-size:11px;line-height:16px;height:16px;right:514px;">0</span>
<span id="t196" class="t s" style="top:312px;font-size:11px;line-height:16px;height:16px;left:228px;letter-spacing:0.062px;">master</span>
<span id="t197" class="t s" style="top:312px;font-size:11px;line-height:16px;height:16px;left:292px;letter-spacing:-0.050px;">background</span>
<span id="t198" class="t s" style="top:312px;font-size:11px;line-height:16px;height:16px;right:218px;">0</span>
<span id="t199" class="t s" style="top:312px;font-size:11px;line-height:16px;height:16px;left:483px;letter-spacing:-0.878px;">BRKR EVENT HNDLR</span>
<div class="a" style="left:50px;top:344px;width:647px;height:1px;background:#ededed"></div>
<span id="t200" class="t s" style="top:328px;font-size:11px;line-height:16px;height:16px;right:669px;">20</span>
<span id="t201" class="t s" style="top:328px;font-size:11px;line-height:16px;height:16px;left:51px;">29</span>
<span id="t202" class="t s" style="top:328px;font-size:11px;line-height:16px;height:16px;right:514px;">0</span>
<span id="t203" class="t s" style="top:328px;font-size:11px;line-height:16px;height:16px;left:228px;letter-spacing:0.062px;">master</span>
<span id="t204" class="t s" style="top:328px;font-size:11px;line-height:16px;height:16px;left:292px;letter-spacing:-0.050px;">background</span>
<span id="t205" class="t s" style="top:328px;font-size:11px;line-height:16px;height:16px;right:218px;">0</span>
<span id="t206" class="t s" style="top:328px;font-size:11px;line-height:16px;height:16px;left:483px;letter-spacing:-0.615px;">FT FULL PASS</span>
<div class="a" style="left:50px;top:360px;width:647px;height:1px;background:#ededed"></div>
<span id="t207" class="t s" style="top:344px;font-size:11px;line-height:16px;height:16px;right:669px;">21</span>
<span id="t208" class="t s" style="top:344px;font-size:11px;line-height:16px;height:16px;left:51px;">3</span>
<span id="t209" class="t s" style="top:344px;font-size:11px;line-height:16px;height:16px;right:514px;">0</span>
<span id="t210" class="t s" style="top:344px;font-size:11px;line-height:16px;height:16px;left:292px;letter-spacing:-0.050px;">background</span>
<span id="t211" class="t s" style="top:344px;font-size:11px;line-height:16px;height:16px;right:218px;">0</span>
<span id="t212" class="t s" style="top:344px;font-size:11px;line-height:16px;height:16px;left:483px;letter-spacing:-0.615px;">LAZY WRITER</span>
<div class="a" style="left:50px;top:376px;width:647px;height:1px;background:#ededed"></div>
<span id="t213" class="t s" style="top:360px;font-size:11px;line-height:16px;height:16px;right:669px;">22</span>
<span id="t214" class="t s" style="top:360px;font-size:11px;line-height:16px;height:16px;left:51px;">2</span>
<span id="t215" class="t s" style="top:360px;font-size:11px;line-height:16px;height:16px;right:514px;">0</span>
<span id="t216" class="t s" style="top:360px;font-size:11px;line-height:16px;height:16px;left:292px;letter-spacing:-0.050px;">background</span>
<span id="t217" class="t s" style="top:360px;font-size:11px;line-height:16px;height:16px;right:218px;">0</span>
<span id="t218" class="t s" style="top:360px;font-size:11px;line-height:16px;height:16px;left:483px;letter-spacing:-0.785px;">RECOVERY WRITER</span>
<div class="a" style="left:50px;top:392px;width:647px;height:1px;background:#ededed"></div>
<span id="t219" class="t s" style="top:376px;font-size:11px;line-height:16px;height:16px;right:669px;">23</span>
<span id="t220" class="t s" style="top:376px;font-size:11px;line-height:16px;height:16px;left:51px;">10</span>
<span id="t221" class="t s" style="top:376px;font-size:11px;line-height:16px;height:16px;right:514px;">0</span>
<span id="t222" class="t s" style="top:376px;font-size:11px;line-height:16px;height:16px;left:228px;letter-spacing:0.062px;">master</span>
<span id="t223" class="t s" style="top:376px;font-size:11px;line-height:16px;height:16px;left:292px;letter-spacing:-0.123px;">sleeping</span>
<span id="t224" class="t s" style="top:376px;font-size:11px;line-height:16px;height:16px;right:218px;">0</span>
<span id="t225" class="t s" style="top:376px;font-size:11px;line-height:16px;height:16px;left:483px;letter-spacing:-0.799px;">TASK MANAGER</span>
<div class="a" style="left:50px;top:408px;width:647px;height:1px;background:#ededed"></div>
<span id="t226" class="t s" style="top:392px;font-size:11px;line-height:16px;height:16px;right:669px;">24</span>
<span id="t227" class="t s" style="top:392px;font-size:11px;line-height:16px;height:16px;left:51px;">1</span>
<span id="t228" class="t s" style="top:392px;font-size:11px;line-height:16px;height:16px;right:514px;">0</span>
<span id="t229" class="t s" style="top:392px;font-size:11px;line-height:16px;height:16px;left:292px;letter-spacing:-0.050px;">background</span>
<span id="t230" class="t s" style="top:392px;font-size:11px;line-height:16px;height:16px;right:218px;">0</span>
<span id="t231" class="t s" style="top:392px;font-size:11px;line-height:16px;height:16px;left:483px;letter-spacing:-0.667px;">LOG WRITER</span>
<div class="a" style="left:50px;top:424px;width:647px;height:1px;background:#ededed"></div>
<span id="t232" class="t s" style="top:408px;font-size:11px;line-height:16px;height:16px;right:669px;">25</span>
<span id="t233" class="t s" style="top:408px;font-size:11px;line-height:16px;height:16px;left:51px;">7</span>
<span id="t234" class="t s" style="top:408px;font-size:11px;line-height:16px;height:16px;right:514px;">0</span>
<span id="t235" class="t s" style="top:408px;font-size:11px;line-height:16px;height:16px;left:292px;letter-spacing:-0.050px;">background</span>
<span id="t236" class="t s" style="top:408px;font-size:11px;line-height:16px;height:16px;right:218px;">0</span>
<span id="t237" class="t s" style="top:408px;font-size:11px;line-height:16px;height:16px;left:483px;letter-spacing:-0.759px;">RESOURCE MONITOR</span>
<div class="a" style="left:50px;top:440px;width:647px;height:1px;background:#ededed"></div>
<span id="t238" class="t s" style="top:424px;font-size:11px;line-height:16px;height:16px;right:669px;">26</span>
<span id="t239" class="t s" style="top:424px;font-size:11px;line-height:16px;height:16px;left:51px;">6</span>
<span id="t240" class="t s" style="top:424px;font-size:11px;line-height:16px;height:16px;right:514px;">0</span>
<span id="t241" class="t s" style="top:424px;font-size:11px;line-height:16px;height:16px;left:292px;letter-spacing:-0.050px;">background</span>
<span id="t242" class="t s" style="top:424px;font-size:11px;line-height:16px;height:16px;right:218px;">0</span>
<span id="t243" class="t s" style="top:424px;font-size:11px;line-height:16px;height:16px;left:483px;letter-spacing:-0.596px;">XE TIMER</span>
<div class="a" style="left:50px;top:456px;width:647px;height:1px;background:#ededed"></div>
<span id="t244" class="t s" style="top:440px;font-size:11px;line-height:16px;height:16px;right:669px;">27</span>
<span id="t245" class="t s" style="top:440px;font-size:11px;line-height:16px;height:16px;left:51px;">5</span>
<span id="t246" class="t s" style="top:440px;font-size:11px;line-height:16px;height:16px;right:514px;">0</span>
<span id="t247" class="t s" style="top:440px;font-size:11px;line-height:16px;height:16px;left:292px;letter-spacing:-0.050px;">background</span>
<span id="t248" class="t s" style="top:440px;font-size:11px;line-height:16px;height:16px;right:218px;">0</span>
<span id="t249" class="t s" style="top:440px;font-size:11px;line-height:16px;height:16px;left:483px;letter-spacing:-0.564px;">LOCK MONITOR</span>
<div class="a" style="left:50px;top:472px;width:647px;height:1px;background:#ededed"></div>
<span id="t250" class="t s" style="top:456px;font-size:11px;line-height:16px;height:16px;right:669px;">28</span>
<span id="t251" class="t s" style="top:456px;font-size:11px;line-height:16px;height:16px;left:51px;">31</span>
<span id="t252" class="t s" style="top:456px;font-size:11px;line-height:16px;height:16px;right:514px;">0</span>
<span id="t253" class="t s" style="top:456px;font-size:11px;line-height:16px;height:16px;left:228px;letter-spacing:0.062px;">master</span>
<span id="t254" class="t s" style="top:456px;font-size:11px;line-height:16px;height:16px;left:292px;letter-spacing:-0.050px;">background</span>
<span id="t255" class="t s" style="top:456px;font-size:11px;line-height:16px;height:16px;right:218px;">0</span>
<span id="t256" class="t s" style="top:456px;font-size:11px;line-height:16px;height:16px;left:483px;letter-spacing:-0.760px;">BRKR TASK</span>
<div class="a" style="left:50px;top:488px;width:647px;height:1px;background:#ededed"></div>
<span id="t257" class="t s" style="top:472px;font-size:11px;line-height:16px;height:16px;right:669px;">29</span>
<span id="t258" class="t s" style="top:472px;font-size:11px;line-height:16px;height:16px;left:51px;">4</span>
<span id="t259" class="t s" style="top:472px;font-size:11px;line-height:16px;height:16px;right:514px;">0</span>
<span id="t260" class="t s" style="top:472px;font-size:11px;line-height:16px;height:16px;left:228px;letter-spacing:0.062px;">master</span>
<span id="t261" class="t s" style="top:472px;font-size:11px;line-height:16px;height:16px;left:292px;letter-spacing:-0.050px;">background</span>
<span id="t262" class="t s" style="top:472px;font-size:11px;line-height:16px;height:16px;right:218px;">0</span>
<span id="t263" class="t s" style="top:472px;font-size:11px;line-height:16px;height:16px;left:483px;letter-spacing:-0.754px;">SIGNAL HANDLER</span>
</div>
<div class="a" style="left:945px;top:204px;width:15px;height:342px;background:#cdcdcd;"></div>
<svg class="a" style="left:949px;top:192px" width="8" height="8" viewBox="0 0 8 8"><path d="M.9 6.300 L4 2.600 L7.100 6.300" fill="none" stroke="#5a5a5a" stroke-width="2"/></svg>
<svg class="a" style="left:949px;top:630px" width="8" height="8" viewBox="0 0 8 8"><path d="M.9 1.700 L4 5.400 L7.100 1.700" fill="none" stroke="#5a5a5a" stroke-width="2"/></svg>
<div class="a" style="left:314px;top:643px;width:197px;height:15px;background:#cdcdcd;"></div>
<svg class="a" style="left:301px;top:647px" width="8" height="8" viewBox="0 0 8 8"><path d="M6.300 .9 L2.600 4 L6.300 7.100" fill="none" stroke="#5a5a5a" stroke-width="2"/></svg>
<svg class="a" style="left:932px;top:647px" width="8" height="8" viewBox="0 0 8 8"><path d="M1.700 .9 L5.400 4 L1.700 7.100" fill="none" stroke="#5a5a5a" stroke-width="2"/></svg>
<div class="a" style="left:8px;top:665px;width:983px;height:1px;background:#a0a0a0;"></div>
<div class="a" style="left:8px;top:685px;width:983px;height:1px;background:#b4b4b4;"></div>
<div class="a" style="left:990px;top:666px;width:1px;height:20px;background:#b4b4b4;"></div>
<span id="t264" class="t s" style="top:668px;font-size:11px;line-height:16px;height:16px;left:11px;letter-spacing:-0.245px;">Local Database Servers / NextGen Servers / SQL Server / MS SQL SERVER 2012</span>
<div class="a" style="left:789px;top:667px;width:128px;height:18px;border-left:1px solid #a0a0a0;"></div>
<div class="a" style="left:790px;top:668px;width:14px;height:16px;background:#b4b4b4;"></div>
<div class="a" style="left:804px;top:668px;width:13px;height:16px;background:#dcdcdc;"></div>
<span id="t265" class="t s" style="top:668px;font-size:11px;line-height:16px;height:16px;left:841px;letter-spacing:-0.167px;">77 : 148 : 989 MB</span>
<svg class="a" style="left:974px;top:668px" width="14" height="16" viewBox="0 0 14 16"><path d="M1.500 5 h11 l-.8 10 q-4.700 1 -9.400 0z" fill="#4a94cc"/><path d="M0 4.500 q7 -2.500 14 0 v-1.200 q-7 -2.500 -14 0z" fill="#a8a8a8"/><path d="M5 2 q2 -2 4 0" fill="none" stroke="#a8a8a8" stroke-width="1.100"/><line x1="4.3" y1="6.5" x2="4.6" y2="13.8" stroke="#eef6ff" stroke-width="1.3" /><line x1="7" y1="6.5" x2="7" y2="14" stroke="#eef6ff" stroke-width="1.3" /><line x1="9.7" y1="6.5" x2="9.4" y2="13.8" stroke="#eef6ff" stroke-width="1.3" /></svg>
</body></html>
